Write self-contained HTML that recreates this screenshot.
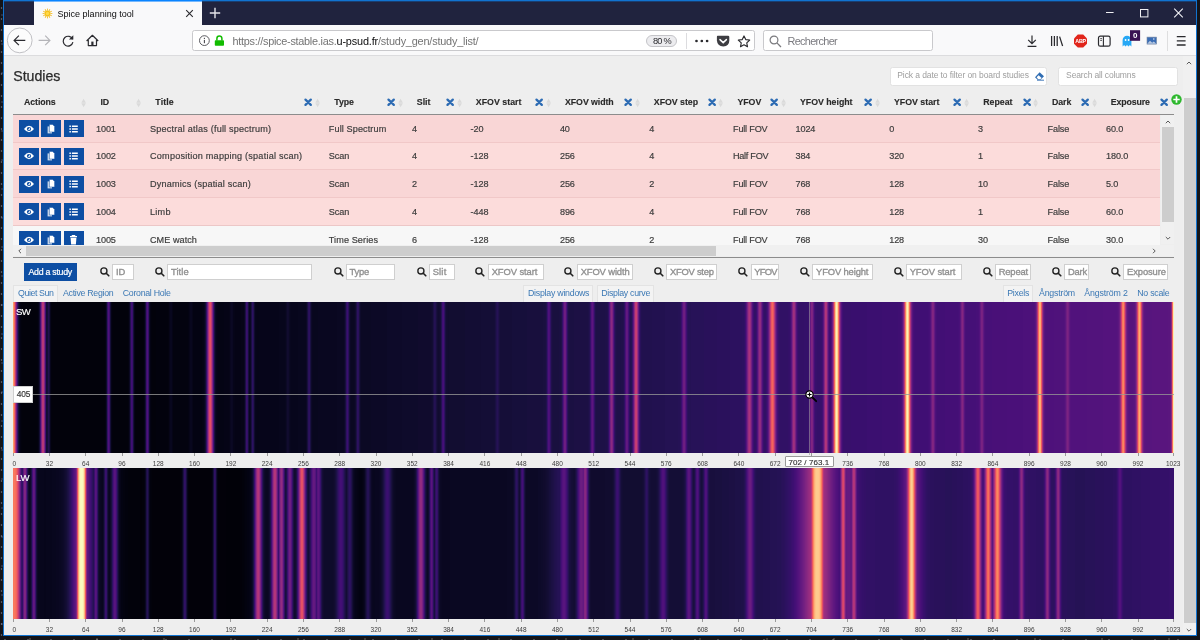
<!DOCTYPE html>
<html lang="fr"><head><meta charset="utf-8"><title>Spice planning tool</title>
<style>
html,body{margin:0;padding:0}
body{width:1200px;height:640px;overflow:hidden;position:relative;background:#17171a;font-family:"Liberation Sans",Arial,sans-serif;}
.b{position:absolute;display:block}
.t{position:absolute;white-space:pre;display:block}
#root{position:absolute;left:0;top:0;width:1200px;height:640px;will-change:transform;}
#desk{position:absolute;left:0;top:0;width:1200px;height:640px;background:
 radial-gradient(circle at 5px 3px,rgba(225,225,235,.75) 0,rgba(225,225,235,0) 1.1px) 0 0/23px 7px,
 radial-gradient(circle at 1.5px 8px,rgba(170,175,200,.7) 0,rgba(170,175,200,0) 1.2px) 0 0/41px 11px,
 radial-gradient(circle at 30px 2px,rgba(140,130,110,.7) 0,rgba(140,130,110,0) 1.4px) 0 0/67px 13px,
 radial-gradient(circle at 2px 15px,rgba(90,100,140,.6) 0,rgba(90,100,140,0) 1.6px) 0 0/17px 29px,
 #141418;}
</style></head>
<body>
<div id="desk"></div>
<div id="root">
<div class="b " style="left:3.00px;top:0.00px;width:1193.50px;height:636.00px;background:#1173d0;"></div>
<div class="b " style="left:4.00px;top:1.00px;width:1191.50px;height:24.00px;background:#20233e;"></div>
<div class="b " style="left:4.00px;top:25.00px;width:1191.50px;height:31.00px;background:#f9f9fa;"></div>
<div class="b " style="left:4.00px;top:55.00px;width:1191.50px;height:1.00px;background:#dcdcde;"></div>
<div class="b " style="left:4.00px;top:56.00px;width:1191.50px;height:579.00px;background:#eeeeee;"></div>
<div class="b " style="left:4.00px;top:1.00px;width:1191.50px;height:1.00px;background:rgba(17,115,208,.35);"></div>
<div class="b " style="left:34.00px;top:0.00px;width:168.00px;height:25.00px;background:#f9f9fa;border-top:1px solid #0a84ff;box-sizing:border-box;"></div>
<div class="b " style="left:34.00px;top:1.00px;width:168.00px;height:1.00px;background:rgba(10,132,255,.55);"></div>
<svg class="b" style="left:40.50px;top:7.00px;" width="13" height="13" viewBox="0 0 13 13"><g transform="translate(6.5,6.5)"><line x1="0" y1="-2.9" x2="0" y2="-4.9" stroke="#f3bd2a" stroke-width="0.9" transform="rotate(0)"/><line x1="0" y1="-2.9" x2="0" y2="-4.9" stroke="#f3bd2a" stroke-width="0.9" transform="rotate(30)"/><line x1="0" y1="-2.9" x2="0" y2="-4.9" stroke="#f3bd2a" stroke-width="0.9" transform="rotate(60)"/><line x1="0" y1="-2.9" x2="0" y2="-4.9" stroke="#f3bd2a" stroke-width="0.9" transform="rotate(90)"/><line x1="0" y1="-2.9" x2="0" y2="-4.9" stroke="#f3bd2a" stroke-width="0.9" transform="rotate(120)"/><line x1="0" y1="-2.9" x2="0" y2="-4.9" stroke="#f3bd2a" stroke-width="0.9" transform="rotate(150)"/><line x1="0" y1="-2.9" x2="0" y2="-4.9" stroke="#f3bd2a" stroke-width="0.9" transform="rotate(180)"/><line x1="0" y1="-2.9" x2="0" y2="-4.9" stroke="#f3bd2a" stroke-width="0.9" transform="rotate(210)"/><line x1="0" y1="-2.9" x2="0" y2="-4.9" stroke="#f3bd2a" stroke-width="0.9" transform="rotate(240)"/><line x1="0" y1="-2.9" x2="0" y2="-4.9" stroke="#f3bd2a" stroke-width="0.9" transform="rotate(270)"/><line x1="0" y1="-2.9" x2="0" y2="-4.9" stroke="#f3bd2a" stroke-width="0.9" transform="rotate(300)"/><line x1="0" y1="-2.9" x2="0" y2="-4.9" stroke="#f3bd2a" stroke-width="0.9" transform="rotate(330)"/><circle r="2.9" fill="#f5c018"/><circle r="1.7" fill="#ffd94a"/></g></svg>
<span class="t " style="left:57.50px;top:9.00px;font-size:9.00px;line-height:10px;color:#0c0c0d;letter-spacing:0.013px;">Spice planning tool</span>
<svg class="b" style="left:185.00px;top:9.00px;" width="9" height="9" viewBox="0 0 9 9"><path d="M1.2 1.2 L7.8 7.8 M7.8 1.2 L1.2 7.8" stroke="#2a2a2e" stroke-width="1.1" fill="none"/></svg>
<svg class="b" style="left:209.00px;top:7.00px;" width="12" height="12" viewBox="0 0 12 12"><path d="M6 0.8 V11.2 M0.8 6 H11.2" stroke="#e4e4ea" stroke-width="1.4" fill="none"/></svg>
<svg class="b" style="left:1100.00px;top:5.00px;" width="96" height="16" viewBox="0 0 96 16"><path d="M6 7.5 H13.6" stroke="#f0f0f4" stroke-width="1"/><rect x="40.5" y="4.5" width="7.4" height="7.4" fill="none" stroke="#f0f0f4" stroke-width="1"/><path d="M74.2 3.7 L82.8 12.3 M82.8 3.7 L74.2 12.3" stroke="#f4f4f8" stroke-width="1.05"/></svg>
<svg class="b" style="left:3.50px;top:25.00px;" width="100" height="31" viewBox="0 0 100 31">
<circle cx="15.7" cy="15.4" r="12.4" fill="#fcfcfc" stroke="#b9b9bd" stroke-width="0.9"/>
<path d="M21.3 15.4 H10.4 M14.9 10.6 L10.1 15.4 L14.9 20.2" stroke="#2b2b30" stroke-width="1.2" fill="none"/>
<path d="M34.6 15.4 H45.6 M41.2 10.7 L45.9 15.4 L41.2 20.1" stroke="#b4b4b8" stroke-width="1.2" fill="none"/>
<path d="M68.6 14.2 A4.9 4.9 0 1 0 68.9 17.2" stroke="#2b2b30" stroke-width="1.2" fill="none"/>
<path d="M69.3 10.2 V14.6 H64.9 Z" fill="#2b2b30"/>
<path d="M82.6 16 L88.4 10.3 L94.2 16 M84.3 15 V20.6 H92.5 V15" stroke="#2b2b30" stroke-width="1.2" fill="none" stroke-linejoin="round"/>
<rect x="87.3" y="16.6" width="2.2" height="4" fill="#2b2b30"/>
</svg>
<div class="b " style="left:191.50px;top:29.60px;width:563.50px;height:21.70px;background:#fff;border:1px solid #c9c9cc;border-radius:2.5px;box-sizing:border-box;"></div>
<div class="b " style="left:763.00px;top:29.60px;width:169.50px;height:21.70px;background:#fff;border:1px solid #c9c9cc;border-radius:2.5px;box-sizing:border-box;"></div>
<svg class="b" style="left:198.00px;top:34.00px;" width="30" height="14" viewBox="0 0 30 14"><circle cx="6.4" cy="6.6" r="4.9" fill="none" stroke="#4a4a4f" stroke-width="0.9"/><rect x="5.85" y="5.9" width="1.1" height="3.3" fill="#4a4a4f"/><rect x="5.85" y="3.8" width="1.1" height="1.2" fill="#4a4a4f"/>
<rect x="16.8" y="6.2" width="9.2" height="5.6" rx="0.8" fill="#12bc00"/><path d="M18.9 6.6 V4.4 A2.5 2.5 0 0 1 23.9 4.4 V6.6" fill="none" stroke="#12bc00" stroke-width="1.5"/></svg>
<span class="t " style="left:232.50px;top:35.00px;font-size:10.90px;line-height:12px;color:#737373;letter-spacing:-0.275px;">https://spice-stable.ias.</span>
<span class="t " style="left:336.50px;top:35.00px;font-size:10.90px;line-height:12px;color:#0c0c0d;letter-spacing:-0.168px;">u-psud.fr</span>
<span class="t " style="left:378.00px;top:35.00px;font-size:10.90px;line-height:12px;color:#737373;letter-spacing:-0.197px;">/study_gen/study_list/</span>
<div class="b " style="left:646.30px;top:34.70px;width:30.70px;height:12.00px;background:#ececef;border:1px solid #c4c4c8;border-radius:6px;box-sizing:border-box;"></div>
<span class="t " style="left:653.00px;top:36.00px;font-size:9.20px;line-height:10px;color:#2a2a2e;letter-spacing:-0.792px;">80 %</span>
<div class="b " style="left:686.00px;top:33.00px;width:1.00px;height:16.00px;background:#dcdcdf;"></div>
<svg class="b" style="left:694.00px;top:33.50px;" width="60" height="15" viewBox="0 0 60 15"><circle cx="2.5" cy="7" r="1.35" fill="#2a2a2e"/><circle cx="7.8" cy="7" r="1.35" fill="#2a2a2e"/><circle cx="13.1" cy="7" r="1.35" fill="#2a2a2e"/>
<path d="M23.6 1.8 H34 Q35.3 1.8 35.3 3.1 V6.6 Q35.3 12.4 29.3 12.4 Q23.3 12.4 22.9 6.6 V3.1 Q22.9 1.8 23.6 1.8 Z" fill="#3d3d42"/><path d="M26 5.6 L29.2 8.6 L32.4 5.6" stroke="#fff" stroke-width="1.5" fill="none" stroke-linecap="round"/>
<path d="M50 1.9 L51.75 5.6 L55.7 6.05 L52.75 8.8 L53.5 12.75 L50 10.8 L46.5 12.75 L47.25 8.8 L44.3 6.05 L48.25 5.6 Z" fill="none" stroke="#2a2a2e" stroke-width="1.15" stroke-linejoin="round"/></svg>
<svg class="b" style="left:768.00px;top:33.50px;" width="16" height="16" viewBox="0 0 16 16"><circle cx="6" cy="6" r="3.9" fill="none" stroke="#7a7a7e" stroke-width="1.2"/><path d="M8.9 8.9 L13 13" stroke="#7a7a7e" stroke-width="1.3"/></svg>
<span class="t " style="left:787.50px;top:35.00px;font-size:10.90px;line-height:12px;color:#7b7b80;letter-spacing:-0.684px;">Rechercher</span>
<svg class="b" style="left:1024.00px;top:34.00px;overflow:visible;" width="172" height="16" viewBox="0 0 172 16">
<path d="M8 1.5 V9.2 M4.2 5.8 L8 9.6 L11.8 5.8 M3.6 12.4 H12.4" stroke="#2a2a2e" stroke-width="1.2" fill="none"/>
<path d="M27.6 2 V12 M30.4 2 V12 M33.2 2 V12 M35.6 2.6 L38.6 12" stroke="#2a2a2e" stroke-width="1.25" fill="none"/>
<path d="M53.8 0.6 H59.2 L63 4.4 V9.8 L59.2 13.6 H53.8 L50 9.8 V4.4 Z" fill="#e1251b"/>
<rect x="74.5" y="2.2" width="11.6" height="10" rx="1.8" fill="none" stroke="#2a2a2e" stroke-width="1.2"/><path d="M79.4 2.2 V12.2" stroke="#2a2a2e" stroke-width="1.1"/><path d="M76.2 4.6 H78 M76.2 6.4 H78" stroke="#2a2a2e" stroke-width="0.8"/>
<path d="M98.6 12.4 V6.2 A4.4 4.4 0 0 1 107.4 6.2 V12.4 L105.9 11.1 L104.5 12.4 L103 11.1 L101.5 12.4 L100.1 11.1 Z" fill="#27a8f5"/><circle cx="101.6" cy="6" r="0.9" fill="#fff"/><circle cx="104.6" cy="6" r="0.9" fill="#fff"/>
<rect x="106" y="-3.8" width="10.1" height="10.6" fill="#3a1152"/>
<rect x="123" y="3.1" width="9.6" height="7" fill="#3a6db5" stroke="#7f8da3" stroke-width="0.6"/><path d="M123.4 9.4 L126 6.8 L128.2 8.8 L129.8 7.6 L132.2 9.8 H123.4Z" fill="#b9c9e0"/><circle cx="129.8" cy="5" r="0.8" fill="#dfe7f3"/>
<path d="M152.8 2.6 H161.6 M152.8 6.8 H161.6 M152.8 11 H161.6" stroke="#2a2a2e" stroke-width="1.3"/>
</svg>
<span class="t " style="left:1075.30px;top:38.00px;font-size:5.40px;line-height:6px;color:#fff;font-weight:700;letter-spacing:-0.267px;">ABP</span>
<span class="t " style="left:1132.98px;top:31.00px;font-size:8.00px;line-height:9px;color:#fff;font-weight:700;">0</span>
<div class="b " style="left:1166.50px;top:31.00px;width:1.00px;height:20.00px;background:#dededf;"></div>
<div class="b " style="left:1183.00px;top:56.00px;width:12.50px;height:579.00px;background:#f0f0f0;"></div>
<div class="b " style="left:1183.50px;top:98.00px;width:12.00px;height:525.00px;background:#cdcdcd;"></div>
<svg class="b" style="left:1184.30px;top:59.00px;" width="10" height="8" viewBox="0 0 10 8"><path d="M2.8 5.2 L5 3 L7.2 5.2" stroke="#5a5a5a" stroke-width="1" fill="none"/></svg>
<svg class="b" style="left:1184.30px;top:625.50px;" width="10" height="8" viewBox="0 0 10 8"><path d="M2.8 3 L5 5.2 L7.2 3" stroke="#5a5a5a" stroke-width="1" fill="none"/></svg>
<span class="t " style="left:13.20px;top:68.00px;font-size:14.20px;line-height:16px;color:#2b2b2b;letter-spacing:-0.009px;-webkit-text-stroke:0.25px #2b2b2b;">Studies</span>
<div class="b " style="left:890.00px;top:66.70px;width:156.70px;height:19.30px;background:#fff;border:1px solid #e2e2e2;border-radius:2.5px;box-sizing:border-box;"></div>
<div class="b " style="left:1058.00px;top:66.70px;width:120.00px;height:19.30px;background:#fff;border:1px solid #e2e2e2;border-radius:2.5px;box-sizing:border-box;"></div>
<span class="t " style="left:897.30px;top:70.00px;font-size:8.50px;line-height:10px;color:#9e9e9e;letter-spacing:-0.096px;">Pick a date to filter on board studies</span>
<span class="t " style="left:1066.10px;top:70.00px;font-size:8.50px;line-height:10px;color:#9e9e9e;letter-spacing:-0.134px;">Search all columns</span>
<svg class="b" style="left:1034.00px;top:71.00px;" width="11" height="10" viewBox="0 0 11 10"><path d="M1 6.2 L5.6 1.2 L10 5.2 L6.6 8.8 H3.6 Z" fill="#2f6db3"/><path d="M2.6 6.3 L4.6 4.2 L7.6 7 L6.2 8.3 H4.2 Z" fill="#fff"/><path d="M3 9.2 H10" stroke="#2f6db3" stroke-width="0.9"/></svg>
<span class="t " style="left:24.10px;top:97.00px;font-size:8.80px;line-height:10px;color:#2a2a2a;font-weight:700;letter-spacing:-0.110px;-webkit-text-stroke:0.12px #2a2a2a;">Actions</span>
<svg class="b" style="left:80.90px;top:97.50px;" width="5.2" height="10" viewBox="0 0 5.2 10"><path d="M0.3 4.65 L2.6 0.8 L4.9 4.65 Z M0.3 5.35 L2.6 9.2 L4.9 5.35 Z" fill="#dadada"/></svg>
<span class="t " style="left:100.50px;top:97.00px;font-size:8.80px;line-height:10px;color:#2a2a2a;font-weight:700;letter-spacing:-0.250px;-webkit-text-stroke:0.12px #2a2a2a;">ID</span>
<svg class="b" style="left:135.90px;top:97.50px;" width="5.2" height="10" viewBox="0 0 5.2 10"><path d="M0.3 4.65 L2.6 0.8 L4.9 4.65 Z M0.3 5.35 L2.6 9.2 L4.9 5.35 Z" fill="#dadada"/></svg>
<span class="t " style="left:155.30px;top:97.00px;font-size:8.80px;line-height:10px;color:#2a2a2a;font-weight:700;letter-spacing:0.114px;-webkit-text-stroke:0.12px #2a2a2a;">Title</span>
<svg class="b" style="left:304.25px;top:98.30px;" width="8.3" height="8.5" viewBox="0 0 8.3 8.5"><path d="M1.5 1.6 L6.8 6.9 M6.8 1.6 L1.5 6.9" stroke="#2c6bb3" stroke-width="2.25" stroke-linecap="round" fill="none"/></svg>
<svg class="b" style="left:314.90px;top:97.50px;" width="5.2" height="10" viewBox="0 0 5.2 10"><path d="M0.3 4.65 L2.6 0.8 L4.9 4.65 Z M0.3 5.35 L2.6 9.2 L4.9 5.35 Z" fill="#dadada"/></svg>
<span class="t " style="left:334.30px;top:97.00px;font-size:8.80px;line-height:10px;color:#2a2a2a;font-weight:700;letter-spacing:-0.097px;-webkit-text-stroke:0.12px #2a2a2a;">Type</span>
<svg class="b" style="left:387.35px;top:98.30px;" width="8.3" height="8.5" viewBox="0 0 8.3 8.5"><path d="M1.5 1.6 L6.8 6.9 M6.8 1.6 L1.5 6.9" stroke="#2c6bb3" stroke-width="2.25" stroke-linecap="round" fill="none"/></svg>
<svg class="b" style="left:397.90px;top:97.50px;" width="5.2" height="10" viewBox="0 0 5.2 10"><path d="M0.3 4.65 L2.6 0.8 L4.9 4.65 Z M0.3 5.35 L2.6 9.2 L4.9 5.35 Z" fill="#dadada"/></svg>
<span class="t " style="left:416.80px;top:97.00px;font-size:8.80px;line-height:10px;color:#2a2a2a;font-weight:700;-webkit-text-stroke:0.12px #2a2a2a;">Slit</span>
<svg class="b" style="left:446.05px;top:98.30px;" width="8.3" height="8.5" viewBox="0 0 8.3 8.5"><path d="M1.5 1.6 L6.8 6.9 M6.8 1.6 L1.5 6.9" stroke="#2c6bb3" stroke-width="2.25" stroke-linecap="round" fill="none"/></svg>
<svg class="b" style="left:456.90px;top:97.50px;" width="5.2" height="10" viewBox="0 0 5.2 10"><path d="M0.3 4.65 L2.6 0.8 L4.9 4.65 Z M0.3 5.35 L2.6 9.2 L4.9 5.35 Z" fill="#dadada"/></svg>
<span class="t " style="left:475.80px;top:97.00px;font-size:8.80px;line-height:10px;color:#2a2a2a;font-weight:700;letter-spacing:0.022px;-webkit-text-stroke:0.12px #2a2a2a;">XFOV start</span>
<svg class="b" style="left:535.45px;top:98.30px;" width="8.3" height="8.5" viewBox="0 0 8.3 8.5"><path d="M1.5 1.6 L6.8 6.9 M6.8 1.6 L1.5 6.9" stroke="#2c6bb3" stroke-width="2.25" stroke-linecap="round" fill="none"/></svg>
<svg class="b" style="left:545.90px;top:97.50px;" width="5.2" height="10" viewBox="0 0 5.2 10"><path d="M0.3 4.65 L2.6 0.8 L4.9 4.65 Z M0.3 5.35 L2.6 9.2 L4.9 5.35 Z" fill="#dadada"/></svg>
<span class="t " style="left:565.00px;top:97.00px;font-size:8.80px;line-height:10px;color:#2a2a2a;font-weight:700;letter-spacing:-0.068px;-webkit-text-stroke:0.12px #2a2a2a;">XFOV width</span>
<svg class="b" style="left:624.25px;top:98.30px;" width="8.3" height="8.5" viewBox="0 0 8.3 8.5"><path d="M1.5 1.6 L6.8 6.9 M6.8 1.6 L1.5 6.9" stroke="#2c6bb3" stroke-width="2.25" stroke-linecap="round" fill="none"/></svg>
<svg class="b" style="left:634.90px;top:97.50px;" width="5.2" height="10" viewBox="0 0 5.2 10"><path d="M0.3 4.65 L2.6 0.8 L4.9 4.65 Z M0.3 5.35 L2.6 9.2 L4.9 5.35 Z" fill="#dadada"/></svg>
<span class="t " style="left:653.80px;top:97.00px;font-size:8.80px;line-height:10px;color:#2a2a2a;font-weight:700;letter-spacing:-0.033px;-webkit-text-stroke:0.12px #2a2a2a;">XFOV step</span>
<svg class="b" style="left:707.95px;top:98.30px;" width="8.3" height="8.5" viewBox="0 0 8.3 8.5"><path d="M1.5 1.6 L6.8 6.9 M6.8 1.6 L1.5 6.9" stroke="#2c6bb3" stroke-width="2.25" stroke-linecap="round" fill="none"/></svg>
<svg class="b" style="left:718.40px;top:97.50px;" width="5.2" height="10" viewBox="0 0 5.2 10"><path d="M0.3 4.65 L2.6 0.8 L4.9 4.65 Z M0.3 5.35 L2.6 9.2 L4.9 5.35 Z" fill="#dadada"/></svg>
<span class="t " style="left:737.50px;top:97.00px;font-size:8.80px;line-height:10px;color:#2a2a2a;font-weight:700;letter-spacing:-0.065px;-webkit-text-stroke:0.12px #2a2a2a;">YFOV</span>
<svg class="b" style="left:770.45px;top:98.30px;" width="8.3" height="8.5" viewBox="0 0 8.3 8.5"><path d="M1.5 1.6 L6.8 6.9 M6.8 1.6 L1.5 6.9" stroke="#2c6bb3" stroke-width="2.25" stroke-linecap="round" fill="none"/></svg>
<svg class="b" style="left:780.90px;top:97.50px;" width="5.2" height="10" viewBox="0 0 5.2 10"><path d="M0.3 4.65 L2.6 0.8 L4.9 4.65 Z M0.3 5.35 L2.6 9.2 L4.9 5.35 Z" fill="#dadada"/></svg>
<span class="t " style="left:800.00px;top:97.00px;font-size:8.80px;line-height:10px;color:#2a2a2a;font-weight:700;letter-spacing:-0.027px;-webkit-text-stroke:0.12px #2a2a2a;">YFOV height</span>
<svg class="b" style="left:864.35px;top:98.30px;" width="8.3" height="8.5" viewBox="0 0 8.3 8.5"><path d="M1.5 1.6 L6.8 6.9 M6.8 1.6 L1.5 6.9" stroke="#2c6bb3" stroke-width="2.25" stroke-linecap="round" fill="none"/></svg>
<svg class="b" style="left:874.90px;top:97.50px;" width="5.2" height="10" viewBox="0 0 5.2 10"><path d="M0.3 4.65 L2.6 0.8 L4.9 4.65 Z M0.3 5.35 L2.6 9.2 L4.9 5.35 Z" fill="#dadada"/></svg>
<span class="t " style="left:893.90px;top:97.00px;font-size:8.80px;line-height:10px;color:#2a2a2a;font-weight:700;letter-spacing:0.012px;-webkit-text-stroke:0.12px #2a2a2a;">YFOV start</span>
<svg class="b" style="left:953.15px;top:98.30px;" width="8.3" height="8.5" viewBox="0 0 8.3 8.5"><path d="M1.5 1.6 L6.8 6.9 M6.8 1.6 L1.5 6.9" stroke="#2c6bb3" stroke-width="2.25" stroke-linecap="round" fill="none"/></svg>
<svg class="b" style="left:964.40px;top:97.50px;" width="5.2" height="10" viewBox="0 0 5.2 10"><path d="M0.3 4.65 L2.6 0.8 L4.9 4.65 Z M0.3 5.35 L2.6 9.2 L4.9 5.35 Z" fill="#dadada"/></svg>
<span class="t " style="left:983.20px;top:97.00px;font-size:8.80px;line-height:10px;color:#2a2a2a;font-weight:700;letter-spacing:-0.007px;-webkit-text-stroke:0.12px #2a2a2a;">Repeat</span>
<svg class="b" style="left:1022.55px;top:98.30px;" width="8.3" height="8.5" viewBox="0 0 8.3 8.5"><path d="M1.5 1.6 L6.8 6.9 M6.8 1.6 L1.5 6.9" stroke="#2c6bb3" stroke-width="2.25" stroke-linecap="round" fill="none"/></svg>
<svg class="b" style="left:1033.40px;top:97.50px;" width="5.2" height="10" viewBox="0 0 5.2 10"><path d="M0.3 4.65 L2.6 0.8 L4.9 4.65 Z M0.3 5.35 L2.6 9.2 L4.9 5.35 Z" fill="#dadada"/></svg>
<span class="t " style="left:1052.00px;top:97.00px;font-size:8.80px;line-height:10px;color:#2a2a2a;font-weight:700;letter-spacing:-0.092px;-webkit-text-stroke:0.12px #2a2a2a;">Dark</span>
<svg class="b" style="left:1081.15px;top:98.30px;" width="8.3" height="8.5" viewBox="0 0 8.3 8.5"><path d="M1.5 1.6 L6.8 6.9 M6.8 1.6 L1.5 6.9" stroke="#2c6bb3" stroke-width="2.25" stroke-linecap="round" fill="none"/></svg>
<svg class="b" style="left:1091.90px;top:97.50px;" width="5.2" height="10" viewBox="0 0 5.2 10"><path d="M0.3 4.65 L2.6 0.8 L4.9 4.65 Z M0.3 5.35 L2.6 9.2 L4.9 5.35 Z" fill="#dadada"/></svg>
<span class="t " style="left:1110.70px;top:97.00px;font-size:8.80px;line-height:10px;color:#2a2a2a;font-weight:700;letter-spacing:-0.113px;-webkit-text-stroke:0.12px #2a2a2a;">Exposure</span>
<svg class="b" style="left:1160.35px;top:98.30px;" width="8.3" height="8.5" viewBox="0 0 8.3 8.5"><path d="M1.5 1.6 L6.8 6.9 M6.8 1.6 L1.5 6.9" stroke="#2c6bb3" stroke-width="2.25" stroke-linecap="round" fill="none"/></svg>
<svg class="b" style="left:1170.60px;top:94.20px;" width="11" height="11" viewBox="0 0 11 11"><circle cx="5.5" cy="5.5" r="5.2" fill="#2eb82e"/><path d="M5.5 2.3 V8.7 M2.3 5.5 H8.7" stroke="#fff" stroke-width="1.7"/></svg>
<div class="b " style="left:0.00px;top:0.00px;width:1200.00px;height:244.50px;overflow:hidden;background:none;"><div class="b " style="left:13.30px;top:114.30px;width:1147.20px;height:27.75px;background:#f9d6d6;"></div><div class="b " style="left:18.90px;top:120.00px;width:19.90px;height:17.00px;background:#0d4ea3;"></div><svg class="b" style="left:23.85px;top:124.50px;" width="10" height="8" viewBox="0 0 10 8"><path d="M0 4 Q5 -2.4 10 4 Q5 10.4 0 4 Z" fill="#fff"/><circle cx="5" cy="4" r="2.1" fill="#0d4ea3"/><circle cx="5.1" cy="3.9" r="1.1" fill="#fff" opacity=".85"/><circle cx="4.4" cy="3.3" r="0.7" fill="#0d4ea3"/></svg><div class="b " style="left:41.30px;top:120.00px;width:19.90px;height:17.00px;background:#0d4ea3;"></div><svg class="b" style="left:47.25px;top:123.50px;" width="8" height="10" viewBox="0 0 8 10"><path d="M0.6 2.4 H5 V9.4 H0.6 Z" fill="#fff" opacity=".8"/><path d="M2.4 0.4 H5.6 L7.6 2.4 V8 H2.4 Z" fill="#fff" stroke="#0d4ea3" stroke-width="0.5"/></svg><div class="b " style="left:63.90px;top:120.00px;width:19.90px;height:17.00px;background:#0d4ea3;"></div><svg class="b" style="left:69.25px;top:124.50px;" width="9.2" height="8" viewBox="0 0 9.2 8"><path d="M0.4 1.3 H1.9 M0.4 4 H1.9 M0.4 6.7 H1.9" stroke="#fff" stroke-width="1.4"/><path d="M2.9 1.3 H8.8 M2.9 4 H8.8 M2.9 6.7 H8.8" stroke="#fff" stroke-width="1.4"/></svg><span class="t " style="left:96.00px;top:124.00px;font-size:9.10px;line-height:10px;color:#3c3c3c;letter-spacing:-0.111px;-webkit-text-stroke:0.18px #3c3c3c;">1001</span><span class="t " style="left:150.00px;top:124.00px;font-size:9.10px;line-height:10px;color:#3c3c3c;letter-spacing:0.203px;-webkit-text-stroke:0.18px #3c3c3c;">Spectral atlas (full spectrum)</span><span class="t " style="left:328.80px;top:124.00px;font-size:9.10px;line-height:10px;color:#3c3c3c;letter-spacing:0.113px;-webkit-text-stroke:0.18px #3c3c3c;">Full Spectrum</span><span class="t " style="left:412.00px;top:124.00px;font-size:9.10px;line-height:10px;color:#3c3c3c;-webkit-text-stroke:0.18px #3c3c3c;">4</span><span class="t " style="left:470.50px;top:124.00px;font-size:9.10px;line-height:10px;color:#3c3c3c;letter-spacing:-0.051px;-webkit-text-stroke:0.18px #3c3c3c;">-20</span><span class="t " style="left:560.00px;top:124.00px;font-size:9.10px;line-height:10px;color:#3c3c3c;letter-spacing:-0.211px;-webkit-text-stroke:0.18px #3c3c3c;">40</span><span class="t " style="left:649.30px;top:124.00px;font-size:9.10px;line-height:10px;color:#3c3c3c;-webkit-text-stroke:0.18px #3c3c3c;">4</span><span class="t " style="left:733.00px;top:124.00px;font-size:9.10px;line-height:10px;color:#3c3c3c;letter-spacing:-0.175px;-webkit-text-stroke:0.18px #3c3c3c;">Full FOV</span><span class="t " style="left:795.50px;top:124.00px;font-size:9.10px;line-height:10px;color:#3c3c3c;letter-spacing:-0.111px;-webkit-text-stroke:0.18px #3c3c3c;">1024</span><span class="t " style="left:889.30px;top:124.00px;font-size:9.10px;line-height:10px;color:#3c3c3c;-webkit-text-stroke:0.18px #3c3c3c;">0</span><span class="t " style="left:978.10px;top:124.00px;font-size:9.10px;line-height:10px;color:#3c3c3c;-webkit-text-stroke:0.18px #3c3c3c;">3</span><span class="t " style="left:1047.50px;top:124.00px;font-size:9.10px;line-height:10px;color:#3c3c3c;letter-spacing:-0.091px;-webkit-text-stroke:0.18px #3c3c3c;">False</span><span class="t " style="left:1106.00px;top:124.00px;font-size:9.10px;line-height:10px;color:#3c3c3c;letter-spacing:-0.140px;-webkit-text-stroke:0.18px #3c3c3c;">60.0</span><div class="b " style="left:13.30px;top:142.05px;width:1147.20px;height:27.75px;background:#fcdcdb;"></div><div class="b " style="left:13.30px;top:141.55px;width:1147.20px;height:1.00px;background:#f1c8c8;"></div><div class="b " style="left:18.90px;top:147.75px;width:19.90px;height:17.00px;background:#0d4ea3;"></div><svg class="b" style="left:23.85px;top:152.25px;" width="10" height="8" viewBox="0 0 10 8"><path d="M0 4 Q5 -2.4 10 4 Q5 10.4 0 4 Z" fill="#fff"/><circle cx="5" cy="4" r="2.1" fill="#0d4ea3"/><circle cx="5.1" cy="3.9" r="1.1" fill="#fff" opacity=".85"/><circle cx="4.4" cy="3.3" r="0.7" fill="#0d4ea3"/></svg><div class="b " style="left:41.30px;top:147.75px;width:19.90px;height:17.00px;background:#0d4ea3;"></div><svg class="b" style="left:47.25px;top:151.25px;" width="8" height="10" viewBox="0 0 8 10"><path d="M0.6 2.4 H5 V9.4 H0.6 Z" fill="#fff" opacity=".8"/><path d="M2.4 0.4 H5.6 L7.6 2.4 V8 H2.4 Z" fill="#fff" stroke="#0d4ea3" stroke-width="0.5"/></svg><div class="b " style="left:63.90px;top:147.75px;width:19.90px;height:17.00px;background:#0d4ea3;"></div><svg class="b" style="left:69.25px;top:152.25px;" width="9.2" height="8" viewBox="0 0 9.2 8"><path d="M0.4 1.3 H1.9 M0.4 4 H1.9 M0.4 6.7 H1.9" stroke="#fff" stroke-width="1.4"/><path d="M2.9 1.3 H8.8 M2.9 4 H8.8 M2.9 6.7 H8.8" stroke="#fff" stroke-width="1.4"/></svg><span class="t " style="left:96.00px;top:151.00px;font-size:9.10px;line-height:10px;color:#3c3c3c;letter-spacing:-0.111px;-webkit-text-stroke:0.18px #3c3c3c;">1002</span><span class="t " style="left:150.00px;top:151.00px;font-size:9.10px;line-height:10px;color:#3c3c3c;letter-spacing:0.228px;-webkit-text-stroke:0.18px #3c3c3c;">Composition mapping (spatial scan)</span><span class="t " style="left:328.80px;top:151.00px;font-size:9.10px;line-height:10px;color:#3c3c3c;letter-spacing:-0.086px;-webkit-text-stroke:0.18px #3c3c3c;">Scan</span><span class="t " style="left:412.00px;top:151.00px;font-size:9.10px;line-height:10px;color:#3c3c3c;-webkit-text-stroke:0.18px #3c3c3c;">4</span><span class="t " style="left:470.50px;top:151.00px;font-size:9.10px;line-height:10px;color:#3c3c3c;letter-spacing:-0.041px;-webkit-text-stroke:0.18px #3c3c3c;">-128</span><span class="t " style="left:560.00px;top:151.00px;font-size:9.10px;line-height:10px;color:#3c3c3c;letter-spacing:-0.144px;-webkit-text-stroke:0.18px #3c3c3c;">256</span><span class="t " style="left:649.30px;top:151.00px;font-size:9.10px;line-height:10px;color:#3c3c3c;-webkit-text-stroke:0.18px #3c3c3c;">4</span><span class="t " style="left:733.00px;top:151.00px;font-size:9.10px;line-height:10px;color:#3c3c3c;letter-spacing:-0.265px;-webkit-text-stroke:0.18px #3c3c3c;">Half FOV</span><span class="t " style="left:795.50px;top:151.00px;font-size:9.10px;line-height:10px;color:#3c3c3c;letter-spacing:-0.144px;-webkit-text-stroke:0.18px #3c3c3c;">384</span><span class="t " style="left:889.30px;top:151.00px;font-size:9.10px;line-height:10px;color:#3c3c3c;letter-spacing:-0.144px;-webkit-text-stroke:0.18px #3c3c3c;">320</span><span class="t " style="left:978.10px;top:151.00px;font-size:9.10px;line-height:10px;color:#3c3c3c;-webkit-text-stroke:0.18px #3c3c3c;">1</span><span class="t " style="left:1047.50px;top:151.00px;font-size:9.10px;line-height:10px;color:#3c3c3c;letter-spacing:-0.091px;-webkit-text-stroke:0.18px #3c3c3c;">False</span><span class="t " style="left:1106.00px;top:151.00px;font-size:9.10px;line-height:10px;color:#3c3c3c;letter-spacing:-0.115px;-webkit-text-stroke:0.18px #3c3c3c;">180.0</span><div class="b " style="left:13.30px;top:169.80px;width:1147.20px;height:27.75px;background:#f9d6d6;"></div><div class="b " style="left:13.30px;top:169.30px;width:1147.20px;height:1.00px;background:#f1c8c8;"></div><div class="b " style="left:18.90px;top:175.50px;width:19.90px;height:17.00px;background:#0d4ea3;"></div><svg class="b" style="left:23.85px;top:180.00px;" width="10" height="8" viewBox="0 0 10 8"><path d="M0 4 Q5 -2.4 10 4 Q5 10.4 0 4 Z" fill="#fff"/><circle cx="5" cy="4" r="2.1" fill="#0d4ea3"/><circle cx="5.1" cy="3.9" r="1.1" fill="#fff" opacity=".85"/><circle cx="4.4" cy="3.3" r="0.7" fill="#0d4ea3"/></svg><div class="b " style="left:41.30px;top:175.50px;width:19.90px;height:17.00px;background:#0d4ea3;"></div><svg class="b" style="left:47.25px;top:179.00px;" width="8" height="10" viewBox="0 0 8 10"><path d="M0.6 2.4 H5 V9.4 H0.6 Z" fill="#fff" opacity=".8"/><path d="M2.4 0.4 H5.6 L7.6 2.4 V8 H2.4 Z" fill="#fff" stroke="#0d4ea3" stroke-width="0.5"/></svg><div class="b " style="left:63.90px;top:175.50px;width:19.90px;height:17.00px;background:#0d4ea3;"></div><svg class="b" style="left:69.25px;top:180.00px;" width="9.2" height="8" viewBox="0 0 9.2 8"><path d="M0.4 1.3 H1.9 M0.4 4 H1.9 M0.4 6.7 H1.9" stroke="#fff" stroke-width="1.4"/><path d="M2.9 1.3 H8.8 M2.9 4 H8.8 M2.9 6.7 H8.8" stroke="#fff" stroke-width="1.4"/></svg><span class="t " style="left:96.00px;top:179.00px;font-size:9.10px;line-height:10px;color:#3c3c3c;letter-spacing:-0.111px;-webkit-text-stroke:0.18px #3c3c3c;">1003</span><span class="t " style="left:150.00px;top:179.00px;font-size:9.10px;line-height:10px;color:#3c3c3c;letter-spacing:0.192px;-webkit-text-stroke:0.18px #3c3c3c;">Dynamics (spatial scan)</span><span class="t " style="left:328.80px;top:179.00px;font-size:9.10px;line-height:10px;color:#3c3c3c;letter-spacing:-0.086px;-webkit-text-stroke:0.18px #3c3c3c;">Scan</span><span class="t " style="left:412.00px;top:179.00px;font-size:9.10px;line-height:10px;color:#3c3c3c;-webkit-text-stroke:0.18px #3c3c3c;">2</span><span class="t " style="left:470.50px;top:179.00px;font-size:9.10px;line-height:10px;color:#3c3c3c;letter-spacing:-0.041px;-webkit-text-stroke:0.18px #3c3c3c;">-128</span><span class="t " style="left:560.00px;top:179.00px;font-size:9.10px;line-height:10px;color:#3c3c3c;letter-spacing:-0.144px;-webkit-text-stroke:0.18px #3c3c3c;">256</span><span class="t " style="left:649.30px;top:179.00px;font-size:9.10px;line-height:10px;color:#3c3c3c;-webkit-text-stroke:0.18px #3c3c3c;">2</span><span class="t " style="left:733.00px;top:179.00px;font-size:9.10px;line-height:10px;color:#3c3c3c;letter-spacing:-0.175px;-webkit-text-stroke:0.18px #3c3c3c;">Full FOV</span><span class="t " style="left:795.50px;top:179.00px;font-size:9.10px;line-height:10px;color:#3c3c3c;letter-spacing:-0.144px;-webkit-text-stroke:0.18px #3c3c3c;">768</span><span class="t " style="left:889.30px;top:179.00px;font-size:9.10px;line-height:10px;color:#3c3c3c;letter-spacing:-0.144px;-webkit-text-stroke:0.18px #3c3c3c;">128</span><span class="t " style="left:978.10px;top:179.00px;font-size:9.10px;line-height:10px;color:#3c3c3c;letter-spacing:-0.211px;-webkit-text-stroke:0.18px #3c3c3c;">10</span><span class="t " style="left:1047.50px;top:179.00px;font-size:9.10px;line-height:10px;color:#3c3c3c;letter-spacing:-0.091px;-webkit-text-stroke:0.18px #3c3c3c;">False</span><span class="t " style="left:1106.00px;top:179.00px;font-size:9.10px;line-height:10px;color:#3c3c3c;letter-spacing:-0.183px;-webkit-text-stroke:0.18px #3c3c3c;">5.0</span><div class="b " style="left:13.30px;top:197.55px;width:1147.20px;height:27.75px;background:#fcdcdb;"></div><div class="b " style="left:13.30px;top:197.05px;width:1147.20px;height:1.00px;background:#f1c8c8;"></div><div class="b " style="left:18.90px;top:203.25px;width:19.90px;height:17.00px;background:#0d4ea3;"></div><svg class="b" style="left:23.85px;top:207.75px;" width="10" height="8" viewBox="0 0 10 8"><path d="M0 4 Q5 -2.4 10 4 Q5 10.4 0 4 Z" fill="#fff"/><circle cx="5" cy="4" r="2.1" fill="#0d4ea3"/><circle cx="5.1" cy="3.9" r="1.1" fill="#fff" opacity=".85"/><circle cx="4.4" cy="3.3" r="0.7" fill="#0d4ea3"/></svg><div class="b " style="left:41.30px;top:203.25px;width:19.90px;height:17.00px;background:#0d4ea3;"></div><svg class="b" style="left:47.25px;top:206.75px;" width="8" height="10" viewBox="0 0 8 10"><path d="M0.6 2.4 H5 V9.4 H0.6 Z" fill="#fff" opacity=".8"/><path d="M2.4 0.4 H5.6 L7.6 2.4 V8 H2.4 Z" fill="#fff" stroke="#0d4ea3" stroke-width="0.5"/></svg><div class="b " style="left:63.90px;top:203.25px;width:19.90px;height:17.00px;background:#0d4ea3;"></div><svg class="b" style="left:69.25px;top:207.75px;" width="9.2" height="8" viewBox="0 0 9.2 8"><path d="M0.4 1.3 H1.9 M0.4 4 H1.9 M0.4 6.7 H1.9" stroke="#fff" stroke-width="1.4"/><path d="M2.9 1.3 H8.8 M2.9 4 H8.8 M2.9 6.7 H8.8" stroke="#fff" stroke-width="1.4"/></svg><span class="t " style="left:96.00px;top:207.00px;font-size:9.10px;line-height:10px;color:#3c3c3c;letter-spacing:-0.111px;-webkit-text-stroke:0.18px #3c3c3c;">1004</span><span class="t " style="left:150.00px;top:207.00px;font-size:9.10px;line-height:10px;color:#3c3c3c;letter-spacing:0.244px;-webkit-text-stroke:0.18px #3c3c3c;">Limb</span><span class="t " style="left:328.80px;top:207.00px;font-size:9.10px;line-height:10px;color:#3c3c3c;letter-spacing:-0.086px;-webkit-text-stroke:0.18px #3c3c3c;">Scan</span><span class="t " style="left:412.00px;top:207.00px;font-size:9.10px;line-height:10px;color:#3c3c3c;-webkit-text-stroke:0.18px #3c3c3c;">4</span><span class="t " style="left:470.50px;top:207.00px;font-size:9.10px;line-height:10px;color:#3c3c3c;letter-spacing:-0.041px;-webkit-text-stroke:0.18px #3c3c3c;">-448</span><span class="t " style="left:560.00px;top:207.00px;font-size:9.10px;line-height:10px;color:#3c3c3c;letter-spacing:-0.144px;-webkit-text-stroke:0.18px #3c3c3c;">896</span><span class="t " style="left:649.30px;top:207.00px;font-size:9.10px;line-height:10px;color:#3c3c3c;-webkit-text-stroke:0.18px #3c3c3c;">4</span><span class="t " style="left:733.00px;top:207.00px;font-size:9.10px;line-height:10px;color:#3c3c3c;letter-spacing:-0.175px;-webkit-text-stroke:0.18px #3c3c3c;">Full FOV</span><span class="t " style="left:795.50px;top:207.00px;font-size:9.10px;line-height:10px;color:#3c3c3c;letter-spacing:-0.144px;-webkit-text-stroke:0.18px #3c3c3c;">768</span><span class="t " style="left:889.30px;top:207.00px;font-size:9.10px;line-height:10px;color:#3c3c3c;letter-spacing:-0.144px;-webkit-text-stroke:0.18px #3c3c3c;">128</span><span class="t " style="left:978.10px;top:207.00px;font-size:9.10px;line-height:10px;color:#3c3c3c;-webkit-text-stroke:0.18px #3c3c3c;">1</span><span class="t " style="left:1047.50px;top:207.00px;font-size:9.10px;line-height:10px;color:#3c3c3c;letter-spacing:-0.091px;-webkit-text-stroke:0.18px #3c3c3c;">False</span><span class="t " style="left:1106.00px;top:207.00px;font-size:9.10px;line-height:10px;color:#3c3c3c;letter-spacing:-0.140px;-webkit-text-stroke:0.18px #3c3c3c;">60.0</span><div class="b " style="left:13.30px;top:225.30px;width:1147.20px;height:27.75px;background:#f7f7f7;"></div><div class="b " style="left:13.30px;top:224.80px;width:1147.20px;height:1.00px;background:#ecc7c7;"></div><div class="b " style="left:18.90px;top:231.00px;width:19.90px;height:17.00px;background:#0d4ea3;"></div><svg class="b" style="left:23.85px;top:235.50px;" width="10" height="8" viewBox="0 0 10 8"><path d="M0 4 Q5 -2.4 10 4 Q5 10.4 0 4 Z" fill="#fff"/><circle cx="5" cy="4" r="2.1" fill="#0d4ea3"/><circle cx="5.1" cy="3.9" r="1.1" fill="#fff" opacity=".85"/><circle cx="4.4" cy="3.3" r="0.7" fill="#0d4ea3"/></svg><div class="b " style="left:41.30px;top:231.00px;width:19.90px;height:17.00px;background:#0d4ea3;"></div><svg class="b" style="left:47.25px;top:234.50px;" width="8" height="10" viewBox="0 0 8 10"><path d="M0.6 2.4 H5 V9.4 H0.6 Z" fill="#fff" opacity=".8"/><path d="M2.4 0.4 H5.6 L7.6 2.4 V8 H2.4 Z" fill="#fff" stroke="#0d4ea3" stroke-width="0.5"/></svg><div class="b " style="left:63.90px;top:231.00px;width:19.90px;height:17.00px;background:#0d4ea3;"></div><svg class="b" style="left:69.35px;top:234.50px;" width="9" height="10" viewBox="0 0 9 10"><path d="M1 1.6 H8 M3.3 1.4 V0.6 H5.7 V1.4" stroke="#fff" stroke-width="1.1" fill="none"/><path d="M1.6 2.8 H7.4 L6.9 9.6 H2.1 Z" fill="#fff"/></svg><span class="t " style="left:96.00px;top:235.00px;font-size:9.10px;line-height:10px;color:#3c3c3c;letter-spacing:-0.111px;-webkit-text-stroke:0.18px #3c3c3c;">1005</span><span class="t " style="left:150.00px;top:235.00px;font-size:9.10px;line-height:10px;color:#3c3c3c;letter-spacing:0.053px;-webkit-text-stroke:0.18px #3c3c3c;">CME watch</span><span class="t " style="left:328.80px;top:235.00px;font-size:9.10px;line-height:10px;color:#3c3c3c;letter-spacing:0.099px;-webkit-text-stroke:0.18px #3c3c3c;">Time Series</span><span class="t " style="left:412.00px;top:235.00px;font-size:9.10px;line-height:10px;color:#3c3c3c;-webkit-text-stroke:0.18px #3c3c3c;">6</span><span class="t " style="left:470.50px;top:235.00px;font-size:9.10px;line-height:10px;color:#3c3c3c;letter-spacing:-0.041px;-webkit-text-stroke:0.18px #3c3c3c;">-128</span><span class="t " style="left:560.00px;top:235.00px;font-size:9.10px;line-height:10px;color:#3c3c3c;letter-spacing:-0.144px;-webkit-text-stroke:0.18px #3c3c3c;">256</span><span class="t " style="left:649.30px;top:235.00px;font-size:9.10px;line-height:10px;color:#3c3c3c;-webkit-text-stroke:0.18px #3c3c3c;">2</span><span class="t " style="left:733.00px;top:235.00px;font-size:9.10px;line-height:10px;color:#3c3c3c;letter-spacing:-0.175px;-webkit-text-stroke:0.18px #3c3c3c;">Full FOV</span><span class="t " style="left:795.50px;top:235.00px;font-size:9.10px;line-height:10px;color:#3c3c3c;letter-spacing:-0.144px;-webkit-text-stroke:0.18px #3c3c3c;">768</span><span class="t " style="left:889.30px;top:235.00px;font-size:9.10px;line-height:10px;color:#3c3c3c;letter-spacing:-0.144px;-webkit-text-stroke:0.18px #3c3c3c;">128</span><span class="t " style="left:978.10px;top:235.00px;font-size:9.10px;line-height:10px;color:#3c3c3c;letter-spacing:-0.211px;-webkit-text-stroke:0.18px #3c3c3c;">30</span><span class="t " style="left:1047.50px;top:235.00px;font-size:9.10px;line-height:10px;color:#3c3c3c;letter-spacing:-0.091px;-webkit-text-stroke:0.18px #3c3c3c;">False</span><span class="t " style="left:1106.00px;top:235.00px;font-size:9.10px;line-height:10px;color:#3c3c3c;letter-spacing:-0.140px;-webkit-text-stroke:0.18px #3c3c3c;">30.0</span></div>
<div class="b " style="left:13.30px;top:113.70px;width:1160.70px;height:0.90px;background:#8c8c8c;"></div>
<div class="b " style="left:1160.50px;top:114.60px;width:13.50px;height:129.90px;background:#f0f0f0;"></div>
<div class="b " style="left:1161.50px;top:127.30px;width:12.50px;height:95.20px;background:#cdcdcd;"></div>
<svg class="b" style="left:1162.50px;top:118.00px;" width="10" height="8" viewBox="0 0 10 8"><path d="M2.8 5.2 L5 3 L7.2 5.2" stroke="#5a5a5a" stroke-width="1" fill="none"/></svg>
<svg class="b" style="left:1162.50px;top:234.00px;" width="10" height="8" viewBox="0 0 10 8"><path d="M2.8 3 L5 5.2 L7.2 3" stroke="#5a5a5a" stroke-width="1" fill="none"/></svg>
<div class="b " style="left:13.30px;top:244.50px;width:1160.70px;height:11.70px;background:#f0f0f0;"></div>
<div class="b " style="left:26.00px;top:245.50px;width:690.00px;height:10.70px;background:#cdcdcd;"></div>
<svg class="b" style="left:15.50px;top:245.50px;" width="8" height="10" viewBox="0 0 8 10"><path d="M5 2.8 L2.8 5 L5 7.2" stroke="#5a5a5a" stroke-width="1" fill="none"/></svg>
<svg class="b" style="left:1149.50px;top:245.50px;" width="8" height="10" viewBox="0 0 8 10"><path d="M3 2.8 L5.2 5 L3 7.2" stroke="#5a5a5a" stroke-width="1" fill="none"/></svg>
<div class="b " style="left:13.30px;top:256.60px;width:1160.70px;height:1.00px;background:#8c8c8c;"></div>
<div class="b " style="left:23.60px;top:263.40px;width:53.40px;height:17.60px;background:#0d4ea3;"></div>
<span class="t " style="left:28.50px;top:267.00px;font-size:8.80px;line-height:10px;color:#fff;letter-spacing:-0.271px;-webkit-text-stroke:0.2px #fff;">Add a study</span>
<svg class="b" style="left:100.00px;top:267.00px;" width="10" height="10" viewBox="0 0 10 10"><circle cx="3.9" cy="3.9" r="3.05" fill="none" stroke="#222" stroke-width="1.35"/><path d="M6.2 6.2 L8.8 8.8" stroke="#222" stroke-width="1.6" stroke-linecap="round"/></svg>
<div class="b " style="left:112.40px;top:264.30px;width:21.20px;height:15.50px;background:#fff;border:1px solid #cfcfcf;box-sizing:border-box;"></div>
<span class="t " style="left:116.10px;top:266.00px;font-size:9.40px;line-height:11px;color:#909090;letter-spacing:-0.200px;-webkit-text-stroke:0.35px #909090;">ID</span>
<svg class="b" style="left:154.80px;top:267.00px;" width="10" height="10" viewBox="0 0 10 10"><circle cx="3.9" cy="3.9" r="3.05" fill="none" stroke="#222" stroke-width="1.35"/><path d="M6.2 6.2 L8.8 8.8" stroke="#222" stroke-width="1.6" stroke-linecap="round"/></svg>
<div class="b " style="left:167.20px;top:264.30px;width:144.60px;height:15.50px;background:#fff;border:1px solid #cfcfcf;box-sizing:border-box;"></div>
<span class="t " style="left:170.90px;top:266.00px;font-size:9.40px;line-height:11px;color:#909090;letter-spacing:0.118px;-webkit-text-stroke:0.35px #909090;">Title</span>
<svg class="b" style="left:333.60px;top:267.00px;" width="10" height="10" viewBox="0 0 10 10"><circle cx="3.9" cy="3.9" r="3.05" fill="none" stroke="#222" stroke-width="1.35"/><path d="M6.2 6.2 L8.8 8.8" stroke="#222" stroke-width="1.6" stroke-linecap="round"/></svg>
<div class="b " style="left:345.80px;top:264.30px;width:49.70px;height:15.50px;background:#fff;border:1px solid #cfcfcf;box-sizing:border-box;"></div>
<span class="t " style="left:349.50px;top:266.00px;font-size:9.40px;line-height:11px;color:#909090;letter-spacing:-0.220px;-webkit-text-stroke:0.35px #909090;">Type</span>
<svg class="b" style="left:416.80px;top:267.00px;" width="10" height="10" viewBox="0 0 10 10"><circle cx="3.9" cy="3.9" r="3.05" fill="none" stroke="#222" stroke-width="1.35"/><path d="M6.2 6.2 L8.8 8.8" stroke="#222" stroke-width="1.6" stroke-linecap="round"/></svg>
<div class="b " style="left:429.00px;top:264.30px;width:25.50px;height:15.50px;background:#fff;border:1px solid #cfcfcf;box-sizing:border-box;"></div>
<span class="t " style="left:432.70px;top:266.00px;font-size:9.40px;line-height:11px;color:#909090;letter-spacing:0.173px;-webkit-text-stroke:0.35px #909090;">Slit</span>
<svg class="b" style="left:475.30px;top:267.00px;" width="10" height="10" viewBox="0 0 10 10"><circle cx="3.9" cy="3.9" r="3.05" fill="none" stroke="#222" stroke-width="1.35"/><path d="M6.2 6.2 L8.8 8.8" stroke="#222" stroke-width="1.6" stroke-linecap="round"/></svg>
<div class="b " style="left:488.00px;top:264.30px;width:55.80px;height:15.50px;background:#fff;border:1px solid #cfcfcf;box-sizing:border-box;"></div>
<span class="t " style="left:491.70px;top:266.00px;font-size:9.40px;line-height:11px;color:#909090;letter-spacing:-0.074px;-webkit-text-stroke:0.35px #909090;">XFOV start</span>
<svg class="b" style="left:564.30px;top:267.00px;" width="10" height="10" viewBox="0 0 10 10"><circle cx="3.9" cy="3.9" r="3.05" fill="none" stroke="#222" stroke-width="1.35"/><path d="M6.2 6.2 L8.8 8.8" stroke="#222" stroke-width="1.6" stroke-linecap="round"/></svg>
<div class="b " style="left:577.00px;top:264.30px;width:55.50px;height:15.50px;background:#fff;border:1px solid #cfcfcf;box-sizing:border-box;"></div>
<span class="t " style="left:580.70px;top:266.00px;font-size:9.40px;line-height:11px;color:#909090;letter-spacing:-0.115px;-webkit-text-stroke:0.35px #909090;">XFOV width</span>
<svg class="b" style="left:653.60px;top:267.00px;" width="10" height="10" viewBox="0 0 10 10"><circle cx="3.9" cy="3.9" r="3.05" fill="none" stroke="#222" stroke-width="1.35"/><path d="M6.2 6.2 L8.8 8.8" stroke="#222" stroke-width="1.6" stroke-linecap="round"/></svg>
<div class="b " style="left:666.30px;top:264.30px;width:50.50px;height:15.50px;background:#fff;border:1px solid #cfcfcf;box-sizing:border-box;"></div>
<span class="t " style="left:670.00px;top:266.00px;font-size:9.40px;line-height:11px;color:#909090;letter-spacing:-0.247px;-webkit-text-stroke:0.35px #909090;">XFOV step</span>
<svg class="b" style="left:737.80px;top:267.00px;" width="10" height="10" viewBox="0 0 10 10"><circle cx="3.9" cy="3.9" r="3.05" fill="none" stroke="#222" stroke-width="1.35"/><path d="M6.2 6.2 L8.8 8.8" stroke="#222" stroke-width="1.6" stroke-linecap="round"/></svg>
<div class="b " style="left:750.50px;top:264.30px;width:28.30px;height:15.50px;background:#fff;border:1px solid #cfcfcf;box-sizing:border-box;"></div>
<span class="t " style="left:754.20px;top:266.00px;font-size:9.40px;line-height:11px;color:#909090;letter-spacing:-0.711px;-webkit-text-stroke:0.35px #909090;">YFOV</span>
<svg class="b" style="left:799.80px;top:267.00px;" width="10" height="10" viewBox="0 0 10 10"><circle cx="3.9" cy="3.9" r="3.05" fill="none" stroke="#222" stroke-width="1.35"/><path d="M6.2 6.2 L8.8 8.8" stroke="#222" stroke-width="1.6" stroke-linecap="round"/></svg>
<div class="b " style="left:812.40px;top:264.30px;width:60.30px;height:15.50px;background:#fff;border:1px solid #cfcfcf;box-sizing:border-box;"></div>
<span class="t " style="left:816.10px;top:266.00px;font-size:9.40px;line-height:11px;color:#909090;letter-spacing:-0.138px;-webkit-text-stroke:0.35px #909090;">YFOV height</span>
<svg class="b" style="left:894.10px;top:267.00px;" width="10" height="10" viewBox="0 0 10 10"><circle cx="3.9" cy="3.9" r="3.05" fill="none" stroke="#222" stroke-width="1.35"/><path d="M6.2 6.2 L8.8 8.8" stroke="#222" stroke-width="1.6" stroke-linecap="round"/></svg>
<div class="b " style="left:906.00px;top:264.30px;width:55.70px;height:15.50px;background:#fff;border:1px solid #cfcfcf;box-sizing:border-box;"></div>
<span class="t " style="left:909.70px;top:266.00px;font-size:9.40px;line-height:11px;color:#909090;letter-spacing:-0.079px;-webkit-text-stroke:0.35px #909090;">YFOV start</span>
<svg class="b" style="left:983.10px;top:267.00px;" width="10" height="10" viewBox="0 0 10 10"><circle cx="3.9" cy="3.9" r="3.05" fill="none" stroke="#222" stroke-width="1.35"/><path d="M6.2 6.2 L8.8 8.8" stroke="#222" stroke-width="1.6" stroke-linecap="round"/></svg>
<div class="b " style="left:995.00px;top:264.30px;width:36.00px;height:15.50px;background:#fff;border:1px solid #cfcfcf;box-sizing:border-box;"></div>
<span class="t " style="left:998.70px;top:266.00px;font-size:9.40px;line-height:11px;color:#909090;letter-spacing:-0.169px;-webkit-text-stroke:0.35px #909090;">Repeat</span>
<svg class="b" style="left:1051.50px;top:267.00px;" width="10" height="10" viewBox="0 0 10 10"><circle cx="3.9" cy="3.9" r="3.05" fill="none" stroke="#222" stroke-width="1.35"/><path d="M6.2 6.2 L8.8 8.8" stroke="#222" stroke-width="1.6" stroke-linecap="round"/></svg>
<div class="b " style="left:1064.30px;top:264.30px;width:25.00px;height:15.50px;background:#fff;border:1px solid #cfcfcf;box-sizing:border-box;"></div>
<span class="t " style="left:1068.00px;top:266.00px;font-size:9.40px;line-height:11px;color:#909090;letter-spacing:-0.212px;-webkit-text-stroke:0.35px #909090;">Dark</span>
<svg class="b" style="left:1110.80px;top:267.00px;" width="10" height="10" viewBox="0 0 10 10"><circle cx="3.9" cy="3.9" r="3.05" fill="none" stroke="#222" stroke-width="1.35"/><path d="M6.2 6.2 L8.8 8.8" stroke="#222" stroke-width="1.6" stroke-linecap="round"/></svg>
<div class="b " style="left:1123.30px;top:264.30px;width:45.00px;height:15.50px;background:#fff;border:1px solid #cfcfcf;box-sizing:border-box;"></div>
<span class="t " style="left:1127.00px;top:266.00px;font-size:9.40px;line-height:11px;color:#909090;letter-spacing:-0.089px;-webkit-text-stroke:0.35px #909090;">Exposure</span>
<div class="b " style="left:13.30px;top:285.00px;width:44.70px;height:17.20px;background:#f3f3f3;border:1px solid #e3e3e3;border-bottom:none;box-sizing:border-box;"></div>
<div class="b " style="left:523.20px;top:285.00px;width:69.60px;height:17.20px;background:#f3f3f3;border:1px solid #e3e3e3;border-bottom:none;box-sizing:border-box;"></div>
<div class="b " style="left:597.00px;top:285.00px;width:57.30px;height:17.20px;background:#f3f3f3;border:1px solid #e3e3e3;border-bottom:none;box-sizing:border-box;"></div>
<div class="b " style="left:1003.30px;top:285.00px;width:29.40px;height:17.20px;background:#f3f3f3;border:1px solid #e3e3e3;border-bottom:none;box-sizing:border-box;"></div>
<span class="t " style="left:18.00px;top:288.00px;font-size:8.80px;line-height:10px;color:#3b78b4;letter-spacing:-0.404px;">Quiet Sun</span>
<span class="t " style="left:63.00px;top:288.00px;font-size:8.80px;line-height:10px;color:#3b78b4;letter-spacing:-0.300px;">Active Region</span>
<span class="t " style="left:122.80px;top:288.00px;font-size:8.80px;line-height:10px;color:#3b78b4;letter-spacing:-0.297px;">Coronal Hole</span>
<span class="t " style="left:528.00px;top:288.00px;font-size:8.80px;line-height:10px;color:#3b78b4;letter-spacing:-0.250px;">Display windows</span>
<span class="t " style="left:601.30px;top:288.00px;font-size:8.80px;line-height:10px;color:#3b78b4;letter-spacing:-0.317px;">Display curve</span>
<span class="t " style="left:1007.30px;top:288.00px;font-size:8.80px;line-height:10px;color:#3b78b4;letter-spacing:-0.296px;">Pixels</span>
<span class="t " style="left:1039.00px;top:288.00px;font-size:8.80px;line-height:10px;color:#3b78b4;letter-spacing:-0.207px;">Ångström</span>
<span class="t " style="left:1084.30px;top:288.00px;font-size:8.80px;line-height:10px;color:#3b78b4;letter-spacing:-0.160px;">Ångström 2</span>
<span class="t " style="left:1137.30px;top:288.00px;font-size:8.80px;line-height:10px;color:#3b78b4;letter-spacing:-0.280px;">No scale</span>
<div class="b " style="left:13.10px;top:302.20px;width:1161.20px;height:151.20px;background:linear-gradient(90deg,#fe9f6d 0.0px,#fd9a6a 0.5px,#fb8560 1.0px,#f4675c 1.5px,#de4968 2.0px,#ba3878 2.5px,#942c80 3.0px,#721f81 3.5px,#54137d 4.0px,#38106c 4.5px,#221150 5.0px,#150e38 5.5px,#0d0a29 6.0px,#07061c 6.5px,#050416 7.0px,#030312 7.5px,#02020d 8.0px,#02020d 8.5px,#02020b 9.0px,#02020b 24.0px,#02020d 24.5px,#03030f 25.0px,#050416 25.5px,#0a0822 26.0px,#130d34 26.5px,#241253 27.0px,#3f0f72 27.5px,#601880 28.0px,#812581 28.5px,#a02f7f 29.0px,#b73779 29.5px,#bf3a77 30.0px,#b73779 30.5px,#a02f7f 31.0px,#812581 31.5px,#601880 32.0px,#3f0f72 32.5px,#241253 33.0px,#130d34 33.5px,#0b0924 34.0px,#140e36 34.5px,#1d1147 35.0px,#21114e 35.5px,#20114b 36.0px,#180f3d 36.5px,#0e0b2b 37.0px,#07061c 37.5px,#040414 38.0px,#02020d 38.5px,#02020b 39.0px,#02020b 91.5px,#02020d 92.0px,#030312 92.5px,#06051a 93.0px,#0e0b2b 93.5px,#1c1044 94.0px,#311165 94.5px,#451077 95.0px,#4f127b 95.5px,#4c117a 96.0px,#3d0f71 96.5px,#271258 97.0px,#150e38 97.5px,#0a0822 98.0px,#050416 98.5px,#03030f 99.0px,#02020d 99.5px,#02020b 100.0px,#02020b 114.5px,#02020d 115.0px,#03030f 115.5px,#050416 116.0px,#0a0822 116.5px,#140e36 117.0px,#221150 117.5px,#341069 118.0px,#400f74 118.5px,#420f75 119.0px,#38106c 119.5px,#251255 120.0px,#160f3b 120.5px,#0b0924 121.0px,#060518 121.5px,#030312 122.0px,#02020d 122.5px,#02020b 123.0px,#02020b 130.0px,#02020d 130.5px,#03030f 131.0px,#050416 131.5px,#0a0822 132.0px,#140e36 132.5px,#251255 133.0px,#3b0f70 133.5px,#4c117a 134.0px,#4f127b 134.5px,#471078 135.0px,#331067 135.5px,#1e1149 136.0px,#100b2d 136.5px,#07061c 137.0px,#040414 137.5px,#02020d 138.0px,#02020d 138.5px,#02020b 139.0px,#02020b 143.0px,#02020d 143.5px,#02020d 154.5px,#03030f 155.0px,#03030f 155.5px,#040414 156.0px,#060518 156.5px,#07061c 157.0px,#08071e 157.5px,#090720 158.0px,#08071e 158.5px,#06051a 159.0px,#050416 159.5px,#030312 160.0px,#03030f 160.5px,#03030f 174.5px,#030312 175.0px,#030312 175.5px,#050416 176.0px,#060518 176.5px,#07061c 177.0px,#08071e 177.5px,#090720 178.0px,#08071e 178.5px,#06051a 179.0px,#060518 179.5px,#040414 180.0px,#030312 180.5px,#030312 189.0px,#040414 189.5px,#040414 190.0px,#050416 190.5px,#060518 191.0px,#08071e 191.5px,#0c0926 192.0px,#130d34 192.5px,#1e1149 193.0px,#311165 193.5px,#4a1079 194.0px,#681c81 194.5px,#882781 195.0px,#aa337d 195.5px,#c53c74 196.0px,#db476a 196.5px,#e44f64 197.0px,#e34e65 197.5px,#d8456c 198.0px,#c03a76 198.5px,#a3307e 199.0px,#812581 199.5px,#621980 200.0px,#451077 200.5px,#2d1161 201.0px,#1c1044 201.5px,#120d31 202.0px,#0b0924 202.5px,#08071e 203.0px,#06051a 203.5px,#050416 204.0px,#050416 204.5px,#040414 205.0px,#040414 211.0px,#050416 211.5px,#050416 215.5px,#060518 216.0px,#060518 216.5px,#07061c 217.0px,#090720 217.5px,#0b0924 218.0px,#0b0924 219.0px,#0a0822 219.5px,#08071e 220.0px,#06051a 220.5px,#060518 221.0px,#060518 221.5px,#050416 222.0px,#050416 228.0px,#060518 228.5px,#060518 230.5px,#07061c 231.0px,#0a0822 231.5px,#110c2f 232.0px,#1c1044 232.5px,#2a115c 233.0px,#38106c 233.5px,#3b0f70 234.0px,#331067 234.5px,#241253 235.0px,#160f3b 235.5px,#0e0b2b 236.0px,#090720 236.5px,#08071e 237.0px,#0b0924 237.5px,#120d31 238.0px,#1a1042 238.5px,#251255 239.0px,#2d1161 239.5px,#2c115f 240.0px,#241253 240.5px,#19103f 241.0px,#110c2f 241.5px,#0a0822 242.0px,#07061c 242.5px,#06051a 243.0px,#06051a 243.5px,#060518 244.0px,#060518 246.0px,#06051a 246.5px,#06051a 265.5px,#07061c 266.0px,#07061c 272.0px,#08071e 272.5px,#0a0822 273.0px,#0c0926 273.5px,#0e0b2b 274.0px,#110c2f 274.5px,#120d31 275.0px,#100b2d 275.5px,#0d0a29 276.0px,#0b0924 276.5px,#090720 277.0px,#08071e 277.5px,#07061c 278.0px,#07061c 285.0px,#08071e 285.5px,#08071e 292.5px,#0a0822 293.0px,#0c0926 293.5px,#110c2f 294.0px,#180f3d 294.5px,#20114b 295.0px,#29115a 295.5px,#2d1161 296.0px,#2c115f 296.5px,#241253 297.0px,#1a1042 297.5px,#130d34 298.0px,#0d0a29 298.5px,#0b0924 299.0px,#090720 299.5px,#090720 300.0px,#08071e 300.5px,#08071e 304.5px,#090720 305.0px,#090720 324.0px,#0a0822 324.5px,#0a0822 330.5px,#0b0924 331.0px,#0d0a29 331.5px,#110c2f 332.0px,#180f3d 332.5px,#21114e 333.0px,#2d1161 333.5px,#38106c 334.0px,#3b0f70 334.5px,#341069 335.0px,#29115a 335.5px,#1d1147 336.0px,#150e38 336.5px,#100b2d 337.0px,#0c0926 337.5px,#0b0924 338.0px,#0a0822 338.5px,#0a0822 340.5px,#0b0924 341.0px,#0b0924 341.5px,#0d0a29 342.0px,#100b2d 342.5px,#150e38 343.0px,#1c1044 343.5px,#241253 344.0px,#2c115f 344.5px,#2d1161 345.0px,#29115a 345.5px,#21114e 346.0px,#19103f 346.5px,#130d34 347.0px,#0e0b2b 347.5px,#0c0926 348.0px,#0b0924 348.5px,#0b0924 358.0px,#0c0926 358.5px,#0c0926 373.5px,#0d0a29 374.0px,#0d0a29 389.0px,#0e0b2b 389.5px,#0e0b2b 405.0px,#100b2d 405.5px,#100b2d 417.5px,#110c2f 418.0px,#110c2f 418.5px,#120d31 419.0px,#130d34 419.5px,#160f3b 420.0px,#1c1044 420.5px,#20114b 421.0px,#241253 421.5px,#251255 422.0px,#221150 422.5px,#1e1149 423.0px,#19103f 423.5px,#150e38 424.0px,#130d34 424.5px,#120d31 425.0px,#110c2f 425.5px,#110c2f 426.0px,#120d31 426.5px,#130d34 427.0px,#150e38 427.5px,#1c1044 428.0px,#241253 428.5px,#331067 429.0px,#3f0f72 429.5px,#471078 430.0px,#451077 430.5px,#3d0f71 431.0px,#2f1163 431.5px,#221150 432.0px,#1a1042 432.5px,#150e38 433.0px,#130d34 433.5px,#120d31 434.0px,#120d31 434.5px,#110c2f 435.0px,#110c2f 436.0px,#120d31 436.5px,#120d31 451.5px,#130d34 452.0px,#130d34 467.5px,#140e36 468.0px,#140e36 480.5px,#150e38 481.0px,#150e38 481.5px,#180f3d 482.0px,#1a1042 482.5px,#1d1147 483.0px,#21114e 483.5px,#241253 484.0px,#251255 484.5px,#241253 485.0px,#20114b 485.5px,#1c1044 486.0px,#19103f 486.5px,#160f3b 487.0px,#150e38 487.5px,#150e38 498.5px,#160f3b 499.0px,#160f3b 514.0px,#180f3d 514.5px,#180f3d 530.0px,#19103f 530.5px,#19103f 532.0px,#1a1042 532.5px,#1d1147 533.0px,#21114e 533.5px,#2a115c 534.0px,#36106b 534.5px,#440f76 535.0px,#4e117b 535.5px,#4f127b 536.0px,#4a1079 536.5px,#3f0f72 537.0px,#311165 537.5px,#251255 538.0px,#20114b 538.5px,#1c1044 539.0px,#1a1042 539.5px,#19103f 540.0px,#19103f 545.5px,#1a1042 546.0px,#1a1042 547.5px,#1c1044 548.0px,#20114b 548.5px,#251255 549.0px,#311165 549.5px,#400f74 550.0px,#52137c 550.5px,#621980 551.0px,#6d1d81 551.5px,#701f81 552.0px,#6a1c81 552.5px,#5c167f 553.0px,#4c117a 553.5px,#390f6e 554.0px,#2c115f 554.5px,#221150 555.0px,#1e1149 555.5px,#1c1044 556.0px,#1c1044 556.5px,#1a1042 557.0px,#1a1042 561.0px,#1c1044 561.5px,#1c1044 574.5px,#1d1147 575.0px,#1d1147 575.5px,#20114b 576.0px,#221150 576.5px,#2a115c 577.0px,#341069 577.5px,#440f76 578.0px,#51127c 578.5px,#5a167e 579.0px,#5c167f 579.5px,#57157e 580.0px,#4c117a 580.5px,#3d0f71 581.0px,#311165 581.5px,#271258 582.0px,#21114e 582.5px,#1e1149 583.0px,#1d1147 583.5px,#1d1147 592.0px,#1e1149 592.5px,#1e1149 593.5px,#20114b 594.0px,#21114e 594.5px,#251255 595.0px,#2d1161 595.5px,#3b0f70 596.0px,#4e117b 596.5px,#621980 597.0px,#752181 597.5px,#842681 598.0px,#8c2981 598.5px,#892881 599.0px,#7c2382 599.5px,#6a1c81 600.0px,#56147d 600.5px,#420f75 601.0px,#331067 601.5px,#29115a 602.0px,#241253 602.5px,#21114e 603.0px,#20114b 603.5px,#1e1149 604.0px,#1e1149 608.0px,#20114b 608.5px,#20114b 610.0px,#221150 610.5px,#271258 611.0px,#2d1161 611.5px,#3b0f70 612.0px,#4a1079 612.5px,#57157e 613.0px,#621980 613.5px,#641a80 614.0px,#5f187f 614.5px,#52137c 615.0px,#440f76 615.5px,#36106b 616.0px,#2c115f 616.5px,#251255 617.0px,#221150 617.5px,#221150 618.0px,#251255 618.5px,#2c115f 619.0px,#38106c 619.5px,#471078 620.0px,#5d177f 620.5px,#762181 621.0px,#932b80 621.5px,#ad347c 622.0px,#c23b75 622.5px,#ca3e72 623.0px,#c73d73 623.5px,#b73779 624.0px,#9e2f7f 624.5px,#812581 625.0px,#671b80 625.5px,#51127c 626.0px,#3d0f71 626.5px,#311165 627.0px,#29115a 627.5px,#241253 628.0px,#221150 628.5px,#21114e 629.0px,#21114e 638.5px,#221150 639.0px,#221150 652.0px,#241253 652.5px,#241253 664.5px,#251255 665.0px,#251255 666.5px,#271258 667.0px,#2a115c 667.5px,#311165 668.0px,#390f6e 668.5px,#451077 669.0px,#54137d 669.5px,#601880 670.0px,#6b1d81 670.5px,#701f81 671.0px,#6e1e81 671.5px,#651a80 672.0px,#59157e 672.5px,#4c117a 673.0px,#3f0f72 673.5px,#341069 674.0px,#2d1161 674.5px,#2a115c 675.0px,#271258 675.5px,#271258 676.5px,#251255 677.0px,#251255 677.5px,#271258 678.0px,#271258 691.0px,#29115a 691.5px,#29115a 704.0px,#2a115c 704.5px,#2a115c 717.0px,#2c115f 717.5px,#2c115f 729.0px,#2d1161 729.5px,#2d1161 730.5px,#2f1163 731.0px,#311165 731.5px,#36106b 732.0px,#3d0f71 732.5px,#471078 733.0px,#56147d 733.5px,#651a80 734.0px,#782281 734.5px,#8b2981 735.0px,#9c2e7f 735.5px,#a6317d 736.0px,#aa337d 736.5px,#a3307e 737.0px,#962c80 737.5px,#842681 738.0px,#721f81 738.5px,#5f187f 739.0px,#4f127b 739.5px,#440f76 740.0px,#3b0f70 740.5px,#341069 741.0px,#311165 741.5px,#2f1163 742.0px,#311165 742.5px,#341069 743.0px,#390f6e 743.5px,#440f76 744.0px,#51127c 744.5px,#621980 745.0px,#752181 745.5px,#862781 746.0px,#912b81 746.5px,#942c80 747.0px,#8e2a81 747.5px,#802582 748.0px,#6d1d81 748.5px,#5c167f 749.0px,#4c117a 749.5px,#400f74 750.0px,#38106c 750.5px,#331067 751.0px,#311165 751.5px,#311165 752.5px,#341069 753.0px,#38106c 753.5px,#3d0f71 754.0px,#451077 754.5px,#52137c 755.0px,#621980 755.5px,#762181 756.0px,#8e2a81 756.5px,#a8327d 757.0px,#c43c75 757.5px,#dc4869 758.0px,#eb5760 758.5px,#f2645c 759.0px,#f3655c 759.5px,#f05f5e 760.0px,#e75263 760.5px,#d3436e 761.0px,#ba3878 761.5px,#9e2f7f 762.0px,#842681 762.5px,#6e1e81 763.0px,#5c167f 763.5px,#4e117b 764.0px,#440f76 764.5px,#3b0f70 765.0px,#38106c 765.5px,#341069 766.0px,#331067 766.5px,#311165 767.0px,#311165 774.5px,#331067 775.0px,#331067 776.0px,#341069 776.5px,#38106c 777.0px,#3f0f72 777.5px,#491078 778.0px,#57157e 778.5px,#6a1c81 779.0px,#7e2482 779.5px,#912b81 780.0px,#9e2f7f 780.5px,#a1307e 781.0px,#992d80 781.5px,#892881 782.0px,#762181 782.5px,#621980 783.0px,#51127c 783.5px,#451077 784.0px,#3d0f71 784.5px,#38106c 785.0px,#341069 785.5px,#341069 786.0px,#331067 786.5px,#331067 791.0px,#341069 791.5px,#341069 794.5px,#36106b 795.0px,#38106c 795.5px,#3f0f72 796.0px,#471078 796.5px,#56147d 797.0px,#651a80 797.5px,#752181 798.0px,#812581 798.5px,#842681 799.0px,#7c2382 799.5px,#701f81 800.0px,#5f187f 800.5px,#4f127b 801.0px,#440f76 801.5px,#3b0f70 802.0px,#38106c 802.5px,#36106b 803.0px,#36106b 803.5px,#341069 804.0px,#341069 806.5px,#36106b 807.0px,#36106b 808.0px,#38106c 808.5px,#390f6e 809.0px,#400f74 809.5px,#4a1079 810.0px,#5a167e 810.5px,#6e1e81 811.0px,#882781 811.5px,#a02f7f 812.0px,#b2357b 812.5px,#b5367a 813.0px,#ab337c 813.5px,#982d80 814.0px,#7e2482 814.5px,#671b80 815.0px,#54137d 815.5px,#451077 816.0px,#3f0f72 816.5px,#390f6e 817.0px,#3d0f71 817.5px,#440f76 818.0px,#4e117b 818.5px,#5c167f 819.0px,#6e1e81 819.5px,#8b2981 820.0px,#ad347c 820.5px,#d6456c 821.0px,#f4695c 821.5px,#fd9a6a 822.0px,#fec488 822.5px,#fde3a5 823.0px,#fcf0b2 823.5px,#fdebac 824.0px,#fed395 824.5px,#feac76 825.0px,#fa7d5e 825.5px,#e55064 826.0px,#bd3977 826.5px,#982d80 827.0px,#792282 827.5px,#641a80 828.0px,#54137d 828.5px,#491078 829.0px,#400f74 829.5px,#3d0f71 830.0px,#390f6e 830.5px,#390f6e 831.0px,#38106c 831.5px,#38106c 838.0px,#390f6e 838.5px,#390f6e 853.5px,#3b0f70 854.0px,#3b0f70 869.0px,#3d0f71 869.5px,#3d0f71 884.5px,#3f0f72 885.0px,#3f0f72 887.0px,#400f74 887.5px,#440f76 888.0px,#471078 888.5px,#4e117b 889.0px,#59157e 889.5px,#681c81 890.0px,#7e2482 890.5px,#9c2e7f 891.0px,#c23b75 891.5px,#e75263 892.0px,#fa7f5e 892.5px,#feae77 893.0px,#fed395 893.5px,#fdebac 894.0px,#fcf0b2 894.5px,#fde3a5 895.0px,#fec68a 895.5px,#fe9d6c 896.0px,#f66c5c 896.5px,#d9466b 897.0px,#b2357b 897.5px,#902a81 898.0px,#762181 898.5px,#621980 899.0px,#56147d 899.5px,#4c117a 900.0px,#471078 900.5px,#440f76 901.0px,#420f75 901.5px,#400f74 902.0px,#400f74 914.5px,#420f75 915.0px,#420f75 916.0px,#451077 916.5px,#491078 917.0px,#51127c 917.5px,#5c167f 918.0px,#6a1c81 918.5px,#782281 919.0px,#812581 919.5px,#842681 920.0px,#7e2482 920.5px,#732081 921.0px,#651a80 921.5px,#59157e 922.0px,#4e117b 922.5px,#491078 923.0px,#451077 923.5px,#440f76 924.0px,#420f75 924.5px,#420f75 931.5px,#440f76 932.0px,#440f76 945.0px,#451077 945.5px,#471078 946.0px,#4a1079 946.5px,#51127c 947.0px,#5a167e 947.5px,#681c81 948.0px,#762181 948.5px,#812581 949.0px,#842681 949.5px,#7e2482 950.0px,#721f81 950.5px,#641a80 951.0px,#57157e 951.5px,#4e117b 952.0px,#491078 952.5px,#471078 953.0px,#451077 953.5px,#451077 963.0px,#471078 963.5px,#471078 965.0px,#491078 965.5px,#4a1079 966.0px,#51127c 966.5px,#59157e 967.0px,#651a80 967.5px,#701f81 968.0px,#792282 968.5px,#7c2382 969.0px,#762181 969.5px,#6d1d81 970.0px,#601880 970.5px,#56147d 971.0px,#4f127b 971.5px,#4a1079 972.0px,#491078 972.5px,#471078 973.0px,#471078 978.5px,#491078 979.0px,#491078 994.0px,#4a1079 994.5px,#4a1079 1010.0px,#4c117a 1010.5px,#4c117a 1020.5px,#4e117b 1021.0px,#4f127b 1021.5px,#52137c 1022.0px,#59157e 1022.5px,#641a80 1023.0px,#752181 1023.5px,#902a81 1024.0px,#b2357b 1024.5px,#db476a 1025.0px,#f56b5c 1025.5px,#fd9668 1026.0px,#feb078 1026.5px,#feb77e 1027.0px,#fea973 1027.5px,#fb8761 1028.0px,#ed5a5f 1028.5px,#ca3e72 1029.0px,#a5317e 1029.5px,#842681 1030.0px,#6e1e81 1030.5px,#5f187f 1031.0px,#57157e 1031.5px,#52137c 1032.0px,#4f127b 1032.5px,#4e117b 1033.0px,#4e117b 1041.0px,#4f127b 1041.5px,#4f127b 1050.5px,#51127c 1051.0px,#52137c 1051.5px,#56147d 1052.0px,#5c167f 1052.5px,#651a80 1053.0px,#6e1e81 1053.5px,#782281 1054.0px,#7c2382 1054.5px,#792282 1055.0px,#732081 1055.5px,#681c81 1056.0px,#5f187f 1056.5px,#59157e 1057.0px,#54137d 1057.5px,#51127c 1058.0px,#51127c 1074.0px,#52137c 1074.5px,#52137c 1090.0px,#54137d 1090.5px,#54137d 1103.5px,#56147d 1104.0px,#56147d 1104.5px,#57157e 1105.0px,#5c167f 1105.5px,#621980 1106.0px,#6d1d81 1106.5px,#7c2382 1107.0px,#942c80 1107.5px,#b3367a 1108.0px,#d3436e 1108.5px,#ee5b5e 1109.0px,#f8765c 1109.5px,#fb8761 1110.0px,#fb8560 1110.5px,#f7725c 1111.0px,#ea5661 1111.5px,#cf4070 1112.0px,#ad347c 1112.5px,#902a81 1113.0px,#792282 1113.5px,#6a1c81 1114.0px,#601880 1114.5px,#5c167f 1115.0px,#59157e 1115.5px,#57157e 1116.0px,#56147d 1116.5px,#56147d 1119.5px,#57157e 1120.0px,#57157e 1120.5px,#59157e 1121.0px,#5a167e 1121.5px,#601880 1122.0px,#681c81 1122.5px,#782281 1123.0px,#8e2a81 1123.5px,#ad347c 1124.0px,#d0416f 1124.5px,#ef5d5e 1125.0px,#fb835f 1125.5px,#fe9f6d 1126.0px,#fea973 1126.5px,#fe9f6d 1127.0px,#fb835f 1127.5px,#ef5d5e 1128.0px,#d0416f 1128.5px,#ad347c 1129.0px,#8e2a81 1129.5px,#782281 1130.0px,#6a1c81 1130.5px,#601880 1131.0px,#5c167f 1131.5px,#59157e 1132.0px,#59157e 1132.5px,#57157e 1133.0px,#57157e 1139.0px,#59157e 1139.5px,#59157e 1155.0px,#5a167e 1155.5px,#5a167e 1156.5px,#5c167f 1157.0px,#621980 1157.5px,#701f81 1158.0px,#8e2a81 1158.5px,#c23b75 1159.0px,#f66e5c 1159.5px,#febd82 1160.0px,#fdebac 1160.5px,#fde5a7 1161.0px,#feae77 1161.5px);"></div>
<div class="b " style="left:13.10px;top:468.00px;width:1161.20px;height:151.40px;background:linear-gradient(90deg,#f9795d 0.0px,#f9795d 0.5px,#f9785d 1.0px,#f9785d 1.5px,#f8765c 2.0px,#f7705c 2.5px,#f56b5c 3.0px,#f2625d 3.5px,#eb5760 4.0px,#e04c67 4.5px,#d2426f 5.0px,#bd3977 5.5px,#a6317d 6.0px,#8e2a81 6.5px,#762181 7.0px,#5f187f 7.5px,#4a1079 8.0px,#36106b 8.5px,#271258 9.0px,#2f1163 9.5px,#451077 10.0px,#5d177f 10.5px,#721f81 11.0px,#802582 11.5px,#842681 12.0px,#7b2382 12.5px,#6a1c81 13.0px,#52137c 13.5px,#390f6e 14.0px,#251255 14.5px,#19103f 15.0px,#120d31 15.5px,#0d0a29 16.0px,#0b0924 16.5px,#0c0926 17.0px,#0e0b2b 17.5px,#140e36 18.0px,#1e1149 18.5px,#2d1161 19.0px,#420f75 19.5px,#54137d 20.0px,#601880 20.5px,#641a80 21.0px,#5c167f 21.5px,#4e117b 22.0px,#38106c 22.5px,#241253 23.0px,#180f3d 23.5px,#100b2d 24.0px,#0c0926 24.5px,#090720 25.0px,#08071e 25.5px,#08071e 26.5px,#07061c 27.0px,#07061c 31.0px,#06051a 31.5px,#06051a 33.0px,#07061c 33.5px,#07061c 38.5px,#08071e 39.0px,#08071e 43.0px,#090720 43.5px,#090720 45.5px,#0a0822 46.0px,#0a0822 47.5px,#0b0924 48.0px,#0b0924 49.0px,#0c0926 49.5px,#0d0a29 50.0px,#0d0a29 50.5px,#0e0b2b 51.0px,#100b2d 51.5px,#110c2f 52.0px,#120d31 52.5px,#130d34 53.0px,#140e36 53.5px,#160f3b 54.0px,#19103f 54.5px,#1a1042 55.0px,#1d1147 55.5px,#21114e 56.0px,#241253 56.5px,#271258 57.0px,#2c115f 57.5px,#311165 58.0px,#36106b 58.5px,#3b0f70 59.0px,#400f74 59.5px,#451077 60.0px,#4c117a 60.5px,#51127c 61.0px,#56147d 61.5px,#5a167e 62.0px,#601880 62.5px,#651a80 63.0px,#812581 63.5px,#b2357b 64.0px,#e04c67 64.5px,#f9785d 65.0px,#fea772 65.5px,#feca8d 66.0px,#fde3a5 66.5px,#fcf2b4 67.0px,#fcfbbd 67.5px,#fcfdbf 68.0px,#fcfdbf 69.0px,#fcfbbd 69.5px,#fcf6b8 70.0px,#fde9aa 70.5px,#fed597 71.0px,#feb67c 71.5px,#fc8a62 72.0px,#ed5a5f 72.5px,#c43c75 73.0px,#932b80 73.5px,#681c81 74.0px,#601880 74.5px,#5c167f 75.0px,#57157e 75.5px,#51127c 76.0px,#4c117a 76.5px,#471078 77.0px,#400f74 77.5px,#3b0f70 78.0px,#36106b 78.5px,#311165 79.0px,#2c115f 79.5px,#271258 80.0px,#241253 80.5px,#251255 81.0px,#38106c 81.5px,#4a1079 82.0px,#56147d 82.5px,#57157e 83.0px,#51127c 83.5px,#420f75 84.0px,#2f1163 84.5px,#20114b 85.0px,#140e36 85.5px,#0d0a29 86.0px,#0c0926 86.5px,#0b0924 87.0px,#0a0822 87.5px,#0a0822 88.0px,#090720 88.5px,#090720 89.0px,#08071e 89.5px,#0a0822 90.0px,#0e0b2b 90.5px,#150e38 91.0px,#20114b 91.5px,#2d1161 92.0px,#38106c 92.5px,#3b0f70 93.0px,#341069 93.5px,#271258 94.0px,#1a1042 94.5px,#120d31 95.0px,#0c0926 95.5px,#090720 96.0px,#090720 96.5px,#0b0924 97.0px,#0e0b2b 97.5px,#130d34 98.0px,#19103f 98.5px,#221150 99.0px,#2d1161 99.5px,#3b0f70 100.0px,#471078 100.5px,#51127c 101.0px,#57157e 101.5px,#59157e 102.0px,#54137d 102.5px,#4c117a 103.0px,#400f74 103.5px,#341069 104.0px,#251255 104.5px,#1c1044 105.0px,#130d34 105.5px,#0d0a29 106.0px,#090720 106.5px,#06051a 107.0px,#060518 107.5px,#040414 108.0px,#030312 108.5px,#030312 109.5px,#03030f 110.0px,#03030f 112.0px,#02020d 112.5px,#02020d 114.5px,#02020b 115.0px,#02020b 127.0px,#020109 127.5px,#020109 129.0px,#02020b 129.5px,#02020b 130.5px,#02020d 131.0px,#03030f 131.5px,#060518 132.0px,#0a0822 132.5px,#120d31 133.0px,#1c1044 133.5px,#221150 134.0px,#251255 134.5px,#21114e 135.0px,#180f3d 135.5px,#0e0b2b 136.0px,#07061c 136.5px,#040414 137.0px,#02020d 137.5px,#02020b 138.0px,#02020b 138.5px,#020109 139.0px,#020109 167.0px,#02020b 167.5px,#02020b 168.0px,#03030f 168.5px,#050416 169.0px,#0a0822 169.5px,#120d31 170.0px,#1c1044 170.5px,#271258 171.0px,#2f1163 171.5px,#311165 172.0px,#2c115f 172.5px,#221150 173.0px,#180f3d 173.5px,#0e0b2b 174.0px,#07061c 174.5px,#040414 175.0px,#02020d 175.5px,#02020b 176.0px,#020109 176.5px,#020109 198.0px,#02020b 198.5px,#03030f 199.0px,#060518 199.5px,#0c0926 200.0px,#160f3b 200.5px,#241253 201.0px,#2f1163 201.5px,#311165 202.0px,#2a115c 202.5px,#1e1149 203.0px,#120d31 203.5px,#090720 204.0px,#040414 204.5px,#02020d 205.0px,#020109 205.5px,#020109 213.0px,#010108 213.5px,#010108 227.0px,#020109 227.5px,#020109 228.5px,#02020b 229.0px,#02020b 230.5px,#02020d 231.0px,#02020d 232.0px,#03030f 232.5px,#03030f 234.0px,#030312 234.5px,#030312 235.5px,#040414 236.0px,#040414 236.5px,#050416 237.0px,#050416 237.5px,#06051a 238.0px,#07061c 238.5px,#0a0822 239.0px,#0d0a29 239.5px,#130d34 240.0px,#1c1044 240.5px,#271258 241.0px,#390f6e 241.5px,#4e117b 242.0px,#641a80 242.5px,#792282 243.0px,#8e2a81 243.5px,#a02f7f 244.0px,#ae347b 244.5px,#b5367a 245.0px,#b5367a 245.5px,#ad347c 246.0px,#a02f7f 246.5px,#8e2a81 247.0px,#782281 247.5px,#641a80 248.0px,#4f127b 248.5px,#3b0f70 249.0px,#2a115c 249.5px,#1e1149 250.0px,#160f3b 250.5px,#120d31 251.0px,#0e0b2b 251.5px,#0c0926 252.0px,#0b0924 252.5px,#0a0822 253.0px,#0a0822 254.5px,#0b0924 255.0px,#0c0926 255.5px,#0e0b2b 256.0px,#120d31 256.5px,#160f3b 257.0px,#20114b 257.5px,#2c115f 258.0px,#3f0f72 258.5px,#54137d 259.0px,#6a1c81 259.5px,#812581 260.0px,#982d80 260.5px,#a8327d 261.0px,#b3367a 261.5px,#b5367a 262.0px,#b0357b 262.5px,#a3307e 263.0px,#902a81 263.5px,#792282 264.0px,#621980 264.5px,#4c117a 265.0px,#38106c 265.5px,#4a1079 266.0px,#601880 266.5px,#752181 267.0px,#862781 267.5px,#912b81 268.0px,#942c80 268.5px,#8e2a81 269.0px,#802582 269.5px,#6d1d81 270.0px,#59157e 270.5px,#440f76 271.0px,#2f1163 271.5px,#21114e 272.0px,#180f3d 272.5px,#160f3b 273.0px,#1e1149 273.5px,#29115a 274.0px,#38106c 274.5px,#4a1079 275.0px,#59157e 275.5px,#651a80 276.0px,#6e1e81 276.5px,#701f81 277.0px,#6b1d81 277.5px,#621980 278.0px,#54137d 278.5px,#440f76 279.0px,#331067 279.5px,#241253 280.0px,#1c1044 280.5px,#150e38 281.0px,#110c2f 281.5px,#100b2d 282.0px,#120d31 282.5px,#150e38 283.0px,#1c1044 283.5px,#251255 284.0px,#36106b 284.5px,#4a1079 285.0px,#601880 285.5px,#7b2382 286.0px,#962c80 286.5px,#b2357b 287.0px,#ca3e72 287.5px,#dc4869 288.0px,#e55064 288.5px,#e85362 289.0px,#e34e65 289.5px,#d6456c 290.0px,#c03a76 290.5px,#a6317d 291.0px,#8b2981 291.5px,#701f81 292.0px,#59157e 292.5px,#420f75 293.0px,#311165 293.5px,#221150 294.0px,#1a1042 294.5px,#150e38 295.0px,#130d34 295.5px,#160f3b 296.0px,#1c1044 296.5px,#221150 297.0px,#2a115c 297.5px,#36106b 298.0px,#420f75 298.5px,#4e117b 299.0px,#57157e 299.5px,#5f187f 300.0px,#641a80 300.5px,#641a80 301.0px,#621980 301.5px,#5c167f 302.0px,#54137d 302.5px,#491078 303.0px,#3d0f71 303.5px,#4a1079 304.0px,#54137d 304.5px,#5a167e 305.0px,#5c167f 305.5px,#59157e 306.0px,#51127c 306.5px,#451077 307.0px,#38106c 307.5px,#2c115f 308.0px,#21114e 308.5px,#1a1042 309.0px,#150e38 309.5px,#120d31 310.0px,#110c2f 310.5px,#100b2d 311.0px,#0e0b2b 311.5px,#0e0b2b 319.5px,#100b2d 320.0px,#100b2d 320.5px,#110c2f 321.0px,#120d31 321.5px,#140e36 322.0px,#160f3b 322.5px,#19103f 323.0px,#1d1147 323.5px,#21114e 324.0px,#271258 324.5px,#2c115f 325.0px,#331067 325.5px,#38106c 326.0px,#3d0f71 326.5px,#400f74 327.0px,#440f76 327.5px,#440f76 328.0px,#420f75 328.5px,#3f0f72 329.0px,#3b0f70 329.5px,#341069 330.0px,#2f1163 330.5px,#29115a 331.0px,#221150 331.5px,#1d1147 332.0px,#19103f 332.5px,#150e38 333.0px,#130d34 333.5px,#160f3b 334.0px,#1c1044 334.5px,#20114b 335.0px,#251255 335.5px,#2a115c 336.0px,#2d1161 336.5px,#2d1161 337.0px,#2a115c 337.5px,#251255 338.0px,#20114b 338.5px,#1a1042 339.0px,#140e36 339.5px,#100b2d 340.0px,#0c0926 340.5px,#0a0822 341.0px,#08071e 341.5px,#07061c 342.0px,#06051a 342.5px,#060518 343.0px,#060518 343.5px,#050416 344.0px,#050416 344.5px,#040414 345.0px,#040414 346.0px,#030312 346.5px,#030312 347.5px,#03030f 348.0px,#030312 348.5px,#030312 349.0px,#040414 349.5px,#050416 350.0px,#060518 350.5px,#07061c 351.0px,#090720 351.5px,#0d0a29 352.0px,#120d31 352.5px,#160f3b 353.0px,#1c1044 353.5px,#21114e 354.0px,#241253 354.5px,#251255 355.0px,#241253 355.5px,#21114e 356.0px,#1c1044 356.5px,#160f3b 357.0px,#130d34 357.5px,#100b2d 358.0px,#0c0926 358.5px,#0a0822 359.0px,#090720 359.5px,#08071e 360.0px,#08071e 362.0px,#090720 362.5px,#090720 365.5px,#0a0822 366.0px,#0a0822 366.5px,#0b0924 367.0px,#0b0924 367.5px,#0d0a29 368.0px,#0e0b2b 368.5px,#110c2f 369.0px,#130d34 369.5px,#160f3b 370.0px,#1a1042 370.5px,#20114b 371.0px,#241253 371.5px,#2a115c 372.0px,#2f1163 372.5px,#341069 373.0px,#38106c 373.5px,#390f6e 374.0px,#3b0f70 374.5px,#390f6e 375.0px,#36106b 375.5px,#331067 376.0px,#2d1161 376.5px,#271258 377.0px,#221150 377.5px,#1d1147 378.0px,#19103f 378.5px,#150e38 379.0px,#120d31 379.5px,#100b2d 380.0px,#0d0a29 380.5px,#0c0926 381.0px,#0b0924 381.5px,#0a0822 382.0px,#0a0822 382.5px,#090720 383.0px,#090720 399.5px,#0a0822 400.0px,#0a0822 400.5px,#0b0924 401.0px,#0d0a29 401.5px,#100b2d 402.0px,#130d34 402.5px,#19103f 403.0px,#21114e 403.5px,#2c115f 404.0px,#3d0f71 404.5px,#4e117b 405.0px,#5f187f 405.5px,#701f81 406.0px,#802582 406.5px,#8b2981 407.0px,#932b80 407.5px,#942c80 408.0px,#902a81 408.5px,#882781 409.0px,#792282 409.5px,#6a1c81 410.0px,#59157e 410.5px,#471078 411.0px,#36106b 411.5px,#271258 412.0px,#1d1147 412.5px,#160f3b 413.0px,#120d31 413.5px,#0e0b2b 414.0px,#0c0926 414.5px,#0c0926 415.0px,#110c2f 415.5px,#160f3b 416.0px,#21114e 416.5px,#311165 417.0px,#440f76 417.5px,#52137c 418.0px,#59157e 418.5px,#56147d 419.0px,#4a1079 419.5px,#390f6e 420.0px,#271258 420.5px,#1a1042 421.0px,#19103f 421.5px,#21114e 422.0px,#2c115f 422.5px,#36106b 423.0px,#3b0f70 423.5px,#38106c 424.0px,#311165 424.5px,#251255 425.0px,#1c1044 425.5px,#140e36 426.0px,#100b2d 426.5px,#0c0926 427.0px,#0b0924 427.5px,#0a0822 428.0px,#0a0822 428.5px,#090720 429.0px,#090720 436.5px,#0a0822 437.0px,#0a0822 493.5px,#0b0924 494.0px,#0b0924 499.5px,#0c0926 500.0px,#0e0b2b 500.5px,#120d31 501.0px,#160f3b 501.5px,#1d1147 502.0px,#241253 502.5px,#2a115c 503.0px,#2d1161 503.5px,#2c115f 504.0px,#271258 504.5px,#20114b 505.0px,#19103f 505.5px,#130d34 506.0px,#120d31 506.5px,#180f3d 507.0px,#20114b 507.5px,#2c115f 508.0px,#38106c 508.5px,#400f74 509.0px,#440f76 509.5px,#3f0f72 510.0px,#341069 510.5px,#271258 511.0px,#1d1147 511.5px,#150e38 512.0px,#110c2f 512.5px,#0e0b2b 513.0px,#0c0926 513.5px,#0c0926 524.5px,#0d0a29 525.0px,#0d0a29 528.0px,#0e0b2b 528.5px,#0e0b2b 530.0px,#100b2d 530.5px,#100b2d 531.5px,#110c2f 532.0px,#110c2f 532.5px,#120d31 533.0px,#120d31 533.5px,#130d34 534.0px,#130d34 534.5px,#140e36 535.0px,#140e36 535.5px,#150e38 536.0px,#160f3b 536.5px,#160f3b 537.0px,#180f3d 537.5px,#19103f 538.0px,#1a1042 538.5px,#1a1042 539.0px,#1c1044 539.5px,#1d1147 540.0px,#1d1147 540.5px,#1e1149 541.0px,#20114b 541.5px,#20114b 542.0px,#21114e 542.5px,#221150 543.0px,#221150 543.5px,#241253 544.0px,#241253 545.0px,#251255 545.5px,#251255 546.5px,#2d1161 547.0px,#341069 547.5px,#3d0f71 548.0px,#440f76 548.5px,#4c117a 549.0px,#51127c 549.5px,#56147d 550.0px,#57157e 550.5px,#59157e 551.0px,#57157e 551.5px,#54137d 552.0px,#4f127b 552.5px,#491078 553.0px,#420f75 553.5px,#390f6e 554.0px,#331067 554.5px,#2a115c 555.0px,#241253 555.5px,#1e1149 556.0px,#1a1042 556.5px,#180f3d 557.0px,#180f3d 557.5px,#160f3b 558.0px,#150e38 558.5px,#150e38 559.0px,#140e36 559.5px,#140e36 560.0px,#130d34 560.5px,#130d34 561.5px,#150e38 562.0px,#19103f 562.5px,#1d1147 563.0px,#221150 563.5px,#2a115c 564.0px,#331067 564.5px,#3d0f71 565.0px,#471078 565.5px,#52137c 566.0px,#5a167e 566.5px,#621980 567.0px,#681c81 567.5px,#6b1d81 568.0px,#6b1d81 568.5px,#6a1c81 569.0px,#671b80 569.5px,#5f187f 570.0px,#621980 570.5px,#732081 571.0px,#812581 571.5px,#882781 572.0px,#862781 572.5px,#7e2482 573.0px,#701f81 573.5px,#5f187f 574.0px,#4c117a 574.5px,#390f6e 575.0px,#2a115c 575.5px,#20114b 576.0px,#19103f 576.5px,#140e36 577.0px,#120d31 577.5px,#110c2f 578.0px,#100b2d 578.5px,#100b2d 591.5px,#110c2f 592.0px,#110c2f 598.5px,#120d31 599.0px,#120d31 599.5px,#130d34 600.0px,#150e38 600.5px,#19103f 601.0px,#1d1147 601.5px,#221150 602.0px,#29115a 602.5px,#2f1163 603.0px,#36106b 603.5px,#390f6e 604.0px,#3b0f70 604.5px,#38106c 605.0px,#341069 605.5px,#2d1161 606.0px,#271258 606.5px,#21114e 607.0px,#1c1044 607.5px,#180f3d 608.0px,#150e38 608.5px,#130d34 609.0px,#130d34 609.5px,#120d31 610.0px,#120d31 628.5px,#130d34 629.0px,#130d34 629.5px,#140e36 630.0px,#150e38 630.5px,#180f3d 631.0px,#1c1044 631.5px,#21114e 632.0px,#251255 632.5px,#2c115f 633.0px,#2d1161 633.5px,#2c115f 634.0px,#29115a 634.5px,#221150 635.0px,#1d1147 635.5px,#19103f 636.0px,#160f3b 636.5px,#140e36 637.0px,#140e36 637.5px,#130d34 638.0px,#130d34 642.5px,#140e36 643.0px,#140e36 643.5px,#150e38 644.0px,#160f3b 644.5px,#19103f 645.0px,#1c1044 645.5px,#20114b 646.0px,#241253 646.5px,#2c115f 647.0px,#331067 647.5px,#3b0f70 648.0px,#420f75 648.5px,#491078 649.0px,#4e117b 649.5px,#4f127b 650.0px,#4f127b 650.5px,#4e117b 651.0px,#491078 651.5px,#420f75 652.0px,#390f6e 652.5px,#311165 653.0px,#2a115c 653.5px,#241253 654.0px,#20114b 654.5px,#1c1044 655.0px,#19103f 655.5px,#160f3b 656.0px,#150e38 656.5px,#150e38 657.0px,#140e36 657.5px,#140e36 668.5px,#150e38 669.0px,#150e38 670.0px,#160f3b 670.5px,#180f3d 671.0px,#1a1042 671.5px,#1d1147 672.0px,#221150 672.5px,#2c115f 673.0px,#36106b 673.5px,#420f75 674.0px,#4c117a 674.5px,#56147d 675.0px,#5a167e 675.5px,#5c167f 676.0px,#59157e 676.5px,#52137c 677.0px,#491078 677.5px,#3d0f71 678.0px,#311165 678.5px,#29115a 679.0px,#21114e 679.5px,#1d1147 680.0px,#19103f 680.5px,#19103f 681.0px,#1d1147 681.5px,#221150 682.0px,#2d1161 682.5px,#390f6e 683.0px,#451077 683.5px,#4e117b 684.0px,#4f127b 684.5px,#4c117a 685.0px,#420f75 685.5px,#341069 686.0px,#29115a 686.5px,#21114e 687.0px,#1c1044 687.5px,#19103f 688.0px,#160f3b 688.5px,#180f3d 689.0px,#1a1042 689.5px,#1d1147 690.0px,#241253 690.5px,#2d1161 691.0px,#390f6e 691.5px,#451077 692.0px,#4e117b 692.5px,#4f127b 693.0px,#4c117a 693.5px,#420f75 694.0px,#36106b 694.5px,#2a115c 695.0px,#221150 695.5px,#1d1147 696.0px,#1a1042 696.5px,#19103f 697.0px,#180f3d 697.5px,#180f3d 701.5px,#19103f 702.0px,#19103f 708.5px,#1a1042 709.0px,#1a1042 715.5px,#1c1044 716.0px,#1c1044 722.0px,#1d1147 722.5px,#1d1147 728.0px,#1e1149 728.5px,#1e1149 729.5px,#20114b 730.0px,#20114b 730.5px,#221150 731.0px,#241253 731.5px,#29115a 732.0px,#2d1161 732.5px,#341069 733.0px,#3d0f71 733.5px,#471078 734.0px,#4f127b 734.5px,#59157e 735.0px,#601880 735.5px,#671b80 736.0px,#6b1d81 736.5px,#6b1d81 737.0px,#6a1c81 737.5px,#651a80 738.0px,#5f187f 738.5px,#57157e 739.0px,#4e117b 739.5px,#440f76 740.0px,#3b0f70 740.5px,#341069 741.0px,#2d1161 741.5px,#29115a 742.0px,#251255 742.5px,#241253 743.0px,#221150 743.5px,#21114e 744.0px,#21114e 750.0px,#221150 750.5px,#221150 757.0px,#241253 757.5px,#241253 763.5px,#251255 764.0px,#251255 767.5px,#271258 768.0px,#271258 769.0px,#29115a 769.5px,#29115a 770.5px,#2a115c 771.0px,#2a115c 771.5px,#2c115f 772.0px,#2c115f 773.0px,#2d1161 773.5px,#2d1161 774.0px,#2f1163 774.5px,#2f1163 775.0px,#311165 775.5px,#311165 776.0px,#331067 776.5px,#341069 777.0px,#341069 777.5px,#36106b 778.0px,#38106c 778.5px,#390f6e 779.0px,#3b0f70 779.5px,#3b0f70 780.0px,#3d0f71 780.5px,#3f0f72 781.0px,#420f75 781.5px,#440f76 782.0px,#451077 782.5px,#471078 783.0px,#4a1079 783.5px,#4c117a 784.0px,#4f127b 784.5px,#51127c 785.0px,#54137d 785.5px,#56147d 786.0px,#59157e 786.5px,#5c167f 787.0px,#5f187f 787.5px,#601880 788.0px,#641a80 788.5px,#671b80 789.0px,#6a1c81 789.5px,#6d1d81 790.0px,#701f81 790.5px,#732081 791.0px,#762181 791.5px,#792282 792.0px,#7e2482 792.5px,#812581 793.0px,#842681 793.5px,#882781 794.0px,#8b2981 794.5px,#8e2a81 795.0px,#932b80 795.5px,#962c80 796.0px,#992d80 796.5px,#9c2e7f 797.0px,#9e2f7f 797.5px,#a1307e 798.0px,#bc3978 798.5px,#d5446d 799.0px,#ea5661 799.5px,#f66e5c 800.0px,#fb8761 800.5px,#fe9d6c 801.0px,#feae77 801.5px,#feb97f 802.0px,#fec287 802.5px,#fec88c 803.0px,#feca8d 803.5px,#feca8d 805.0px,#fec88c 805.5px,#fec68a 806.0px,#febf84 806.5px,#feb67c 807.0px,#fea772 807.5px,#fd9467 808.0px,#fa7d5e 808.5px,#f2645c 809.0px,#e24d66 809.5px,#ca3e72 810.0px,#b0357b 810.5px,#a02f7f 811.0px,#9c2e7f 811.5px,#992d80 812.0px,#962c80 812.5px,#932b80 813.0px,#902a81 813.5px,#8c2981 814.0px,#892881 814.5px,#842681 815.0px,#812581 815.5px,#7e2482 816.0px,#7b2382 816.5px,#762181 817.0px,#732081 817.5px,#701f81 818.0px,#6d1d81 818.5px,#6a1c81 819.0px,#671b80 819.5px,#641a80 820.0px,#601880 820.5px,#5d177f 821.0px,#5c167f 821.5px,#59157e 822.0px,#56147d 822.5px,#54137d 823.0px,#51127c 823.5px,#4f127b 824.0px,#4e117b 824.5px,#4a1079 825.0px,#491078 825.5px,#471078 826.0px,#451077 826.5px,#52137c 827.0px,#651a80 827.5px,#7e2482 828.0px,#9b2e7f 828.5px,#ba3878 829.0px,#d0416f 829.5px,#dc4869 830.0px,#db476a 830.5px,#cd4071 831.0px,#b3367a 831.5px,#942c80 832.0px,#782281 832.5px,#601880 833.0px,#621980 833.5px,#641a80 834.0px,#641a80 836.5px,#621980 837.0px,#601880 837.5px,#5f187f 838.0px,#641a80 838.5px,#792282 839.0px,#902a81 839.5px,#a5317e 840.0px,#b2357b 840.5px,#b5367a 841.0px,#ae347b 841.5px,#9c2e7f 842.0px,#862781 842.5px,#701f81 843.0px,#5c167f 843.5px,#4c117a 844.0px,#420f75 844.5px,#400f74 845.0px,#3f0f72 845.5px,#3d0f71 846.0px,#3b0f70 846.5px,#390f6e 847.0px,#38106c 847.5px,#38106c 848.0px,#36106b 848.5px,#36106b 849.0px,#341069 849.5px,#341069 850.5px,#331067 851.0px,#331067 853.0px,#311165 853.5px,#311165 862.0px,#2f1163 862.5px,#2f1163 881.0px,#311165 881.5px,#311165 882.5px,#331067 883.0px,#331067 883.5px,#341069 884.0px,#341069 884.5px,#36106b 885.0px,#38106c 885.5px,#390f6e 886.0px,#3b0f70 886.5px,#3d0f71 887.0px,#400f74 887.5px,#420f75 888.0px,#451077 888.5px,#471078 889.0px,#4a1079 889.5px,#4e117b 890.0px,#51127c 890.5px,#54137d 891.0px,#57157e 891.5px,#5c167f 892.0px,#5f187f 892.5px,#621980 893.0px,#752181 893.5px,#892881 894.0px,#a3307e 894.5px,#c03a76 895.0px,#dc4869 895.5px,#f2625d 896.0px,#fb835f 896.5px,#fea16e 897.0px,#feb97f 897.5px,#fec88c 898.0px,#fecf92 898.5px,#fecc8f 899.0px,#fec185 899.5px,#feaa74 900.0px,#fc9065 900.5px,#f66e5c 901.0px,#e75263 901.5px,#cc3f71 902.0px,#ad347c 902.5px,#932b80 903.0px,#7b2382 903.5px,#681c81 904.0px,#5f187f 904.5px,#5c167f 905.0px,#57157e 905.5px,#54137d 906.0px,#51127c 906.5px,#4e117b 907.0px,#4a1079 907.5px,#471078 908.0px,#440f76 908.5px,#400f74 909.0px,#3f0f72 909.5px,#3b0f70 910.0px,#390f6e 910.5px,#38106c 911.0px,#36106b 911.5px,#341069 912.0px,#331067 912.5px,#311165 913.0px,#2f1163 913.5px,#2f1163 914.0px,#2d1161 914.5px,#2d1161 915.0px,#2c115f 915.5px,#2c115f 916.5px,#2a115c 917.0px,#2a115c 920.5px,#29115a 921.0px,#29115a 932.0px,#271258 932.5px,#271258 938.5px,#29115a 939.0px,#29115a 944.0px,#2a115c 944.5px,#2a115c 949.5px,#2c115f 950.0px,#2c115f 955.0px,#2d1161 955.5px,#2d1161 957.5px,#2f1163 958.0px,#311165 958.5px,#331067 959.0px,#38106c 959.5px,#400f74 960.0px,#4a1079 960.5px,#59157e 961.0px,#6a1c81 961.5px,#812581 962.0px,#9b2e7f 962.5px,#b73779 963.0px,#cf4070 963.5px,#e24d66 964.0px,#eb5760 964.5px,#ed5a5f 965.0px,#e95462 965.5px,#dc4869 966.0px,#c73d73 966.5px,#ad347c 967.0px,#912b81 967.5px,#792282 968.0px,#651a80 968.5px,#54137d 969.0px,#491078 969.5px,#3f0f72 970.0px,#491078 970.5px,#56147d 971.0px,#671b80 971.5px,#7c2382 972.0px,#962c80 972.5px,#b3367a 973.0px,#d0416f 973.5px,#e75263 974.0px,#f2645c 974.5px,#f66e5c 975.0px,#f66e5c 975.5px,#f1605d 976.0px,#e44f64 976.5px,#cc3f71 977.0px,#ae347b 977.5px,#932b80 978.0px,#792282 978.5px,#651a80 979.0px,#5c167f 979.5px,#6b1d81 980.0px,#802582 980.5px,#962c80 981.0px,#b0357b 981.5px,#cc3f71 982.0px,#e34e65 982.5px,#f2645c 983.0px,#f9785d 983.5px,#fb8560 984.0px,#fb8761 984.5px,#fa815f 985.0px,#f7705c 985.5px,#ee5b5e 986.0px,#dc4869 986.5px,#c23b75 987.0px,#a8327d 987.5px,#8e2a81 988.0px,#782281 988.5px,#671b80 989.0px,#59157e 989.5px,#4e117b 990.0px,#451077 990.5px,#3f0f72 991.0px,#3b0f70 991.5px,#38106c 992.0px,#38106c 992.5px,#36106b 993.0px,#36106b 993.5px,#341069 994.0px,#341069 999.5px,#331067 1000.0px,#331067 1004.0px,#341069 1004.5px,#38106c 1005.0px,#3d0f71 1005.5px,#471078 1006.0px,#56147d 1006.5px,#671b80 1007.0px,#782281 1007.5px,#862781 1008.0px,#8c2981 1008.5px,#892881 1009.0px,#7c2382 1009.5px,#6d1d81 1010.0px,#5a167e 1010.5px,#4c117a 1011.0px,#400f74 1011.5px,#38106c 1012.0px,#341069 1012.5px,#331067 1013.0px,#311165 1013.5px,#311165 1015.0px,#2f1163 1015.5px,#2f1163 1023.0px,#2d1161 1023.5px,#2d1161 1030.0px,#311165 1030.5px,#341069 1031.0px,#3d0f71 1031.5px,#491078 1032.0px,#59157e 1032.5px,#6b1d81 1033.0px,#7c2382 1033.5px,#892881 1034.0px,#8c2981 1034.5px,#842681 1035.0px,#762181 1035.5px,#641a80 1036.0px,#51127c 1036.5px,#420f75 1037.0px,#38106c 1037.5px,#311165 1038.0px,#2d1161 1038.5px,#2c115f 1039.0px,#2c115f 1039.5px,#2a115c 1040.0px,#2c115f 1040.5px,#2c115f 1041.0px,#2f1163 1041.5px,#341069 1042.0px,#3f0f72 1042.5px,#4e117b 1043.0px,#5f187f 1043.5px,#721f81 1044.0px,#832681 1044.5px,#8b2981 1045.0px,#8b2981 1045.5px,#802582 1046.0px,#6e1e81 1046.5px,#5a167e 1047.0px,#491078 1047.5px,#3b0f70 1048.0px,#331067 1048.5px,#2d1161 1049.0px,#2a115c 1049.5px,#29115a 1050.0px,#29115a 1054.0px,#271258 1054.5px,#271258 1062.0px,#251255 1062.5px,#251255 1072.0px,#271258 1072.5px,#271258 1081.5px,#29115a 1082.0px,#29115a 1091.0px,#2a115c 1091.5px,#2a115c 1100.0px,#2c115f 1100.5px,#2c115f 1102.5px,#2d1161 1103.0px,#2f1163 1103.5px,#331067 1104.0px,#38106c 1104.5px,#3f0f72 1105.0px,#451077 1105.5px,#4e117b 1106.0px,#52137c 1106.5px,#54137d 1107.0px,#51127c 1107.5px,#4c117a 1108.0px,#440f76 1108.5px,#3b0f70 1109.0px,#36106b 1109.5px,#311165 1110.0px,#2f1163 1110.5px,#2d1161 1111.0px,#2d1161 1118.5px,#2f1163 1119.0px,#2f1163 1128.0px,#311165 1128.5px,#311165 1137.0px,#331067 1137.5px,#331067 1146.5px,#341069 1147.0px,#341069 1155.5px,#36106b 1156.0px,#36106b 1161.5px);"></div>
<div class="b " style="left:12.70px;top:453.40px;width:0.80px;height:2.60px;background:#9a9a9a;"></div><span class="t " style="left:12.49px;top:460.00px;font-size:6.50px;line-height:7px;color:#3c3c3c;">0</span><div class="b " style="left:48.99px;top:453.40px;width:0.80px;height:2.60px;background:#9a9a9a;"></div><span class="t " style="left:45.77px;top:460.00px;font-size:6.50px;line-height:7px;color:#3c3c3c;">32</span><div class="b " style="left:85.28px;top:453.40px;width:0.80px;height:2.60px;background:#9a9a9a;"></div><span class="t " style="left:82.06px;top:460.00px;font-size:6.50px;line-height:7px;color:#3c3c3c;">64</span><div class="b " style="left:121.56px;top:453.40px;width:0.80px;height:2.60px;background:#9a9a9a;"></div><span class="t " style="left:118.35px;top:460.00px;font-size:6.50px;line-height:7px;color:#3c3c3c;">96</span><div class="b " style="left:157.85px;top:453.40px;width:0.80px;height:2.60px;background:#9a9a9a;"></div><span class="t " style="left:152.83px;top:460.00px;font-size:6.50px;line-height:7px;color:#3c3c3c;">128</span><div class="b " style="left:194.14px;top:453.40px;width:0.80px;height:2.60px;background:#9a9a9a;"></div><span class="t " style="left:189.12px;top:460.00px;font-size:6.50px;line-height:7px;color:#3c3c3c;">160</span><div class="b " style="left:230.43px;top:453.40px;width:0.80px;height:2.60px;background:#9a9a9a;"></div><span class="t " style="left:225.41px;top:460.00px;font-size:6.50px;line-height:7px;color:#3c3c3c;">192</span><div class="b " style="left:266.72px;top:453.40px;width:0.80px;height:2.60px;background:#9a9a9a;"></div><span class="t " style="left:261.69px;top:460.00px;font-size:6.50px;line-height:7px;color:#3c3c3c;">224</span><div class="b " style="left:303.00px;top:453.40px;width:0.80px;height:2.60px;background:#9a9a9a;"></div><span class="t " style="left:297.98px;top:460.00px;font-size:6.50px;line-height:7px;color:#3c3c3c;">256</span><div class="b " style="left:339.29px;top:453.40px;width:0.80px;height:2.60px;background:#9a9a9a;"></div><span class="t " style="left:334.27px;top:460.00px;font-size:6.50px;line-height:7px;color:#3c3c3c;">288</span><div class="b " style="left:375.58px;top:453.40px;width:0.80px;height:2.60px;background:#9a9a9a;"></div><span class="t " style="left:370.56px;top:460.00px;font-size:6.50px;line-height:7px;color:#3c3c3c;">320</span><div class="b " style="left:411.87px;top:453.40px;width:0.80px;height:2.60px;background:#9a9a9a;"></div><span class="t " style="left:406.85px;top:460.00px;font-size:6.50px;line-height:7px;color:#3c3c3c;">352</span><div class="b " style="left:448.16px;top:453.40px;width:0.80px;height:2.60px;background:#9a9a9a;"></div><span class="t " style="left:443.13px;top:460.00px;font-size:6.50px;line-height:7px;color:#3c3c3c;">384</span><div class="b " style="left:484.44px;top:453.40px;width:0.80px;height:2.60px;background:#9a9a9a;"></div><span class="t " style="left:479.42px;top:460.00px;font-size:6.50px;line-height:7px;color:#3c3c3c;">416</span><div class="b " style="left:520.73px;top:453.40px;width:0.80px;height:2.60px;background:#9a9a9a;"></div><span class="t " style="left:515.71px;top:460.00px;font-size:6.50px;line-height:7px;color:#3c3c3c;">448</span><div class="b " style="left:557.02px;top:453.40px;width:0.80px;height:2.60px;background:#9a9a9a;"></div><span class="t " style="left:552.00px;top:460.00px;font-size:6.50px;line-height:7px;color:#3c3c3c;">480</span><div class="b " style="left:593.31px;top:453.40px;width:0.80px;height:2.60px;background:#9a9a9a;"></div><span class="t " style="left:588.29px;top:460.00px;font-size:6.50px;line-height:7px;color:#3c3c3c;">512</span><div class="b " style="left:629.60px;top:453.40px;width:0.80px;height:2.60px;background:#9a9a9a;"></div><span class="t " style="left:624.57px;top:460.00px;font-size:6.50px;line-height:7px;color:#3c3c3c;">544</span><div class="b " style="left:665.88px;top:453.40px;width:0.80px;height:2.60px;background:#9a9a9a;"></div><span class="t " style="left:660.86px;top:460.00px;font-size:6.50px;line-height:7px;color:#3c3c3c;">576</span><div class="b " style="left:702.17px;top:453.40px;width:0.80px;height:2.60px;background:#9a9a9a;"></div><span class="t " style="left:697.15px;top:460.00px;font-size:6.50px;line-height:7px;color:#3c3c3c;">608</span><div class="b " style="left:738.46px;top:453.40px;width:0.80px;height:2.60px;background:#9a9a9a;"></div><span class="t " style="left:733.44px;top:460.00px;font-size:6.50px;line-height:7px;color:#3c3c3c;">640</span><div class="b " style="left:774.75px;top:453.40px;width:0.80px;height:2.60px;background:#9a9a9a;"></div><span class="t " style="left:769.73px;top:460.00px;font-size:6.50px;line-height:7px;color:#3c3c3c;">672</span><div class="b " style="left:811.04px;top:453.40px;width:0.80px;height:2.60px;background:#9a9a9a;"></div><span class="t " style="left:806.01px;top:460.00px;font-size:6.50px;line-height:7px;color:#3c3c3c;">704</span><div class="b " style="left:847.32px;top:453.40px;width:0.80px;height:2.60px;background:#9a9a9a;"></div><span class="t " style="left:842.30px;top:460.00px;font-size:6.50px;line-height:7px;color:#3c3c3c;">736</span><div class="b " style="left:883.61px;top:453.40px;width:0.80px;height:2.60px;background:#9a9a9a;"></div><span class="t " style="left:878.59px;top:460.00px;font-size:6.50px;line-height:7px;color:#3c3c3c;">768</span><div class="b " style="left:919.90px;top:453.40px;width:0.80px;height:2.60px;background:#9a9a9a;"></div><span class="t " style="left:914.88px;top:460.00px;font-size:6.50px;line-height:7px;color:#3c3c3c;">800</span><div class="b " style="left:956.19px;top:453.40px;width:0.80px;height:2.60px;background:#9a9a9a;"></div><span class="t " style="left:951.17px;top:460.00px;font-size:6.50px;line-height:7px;color:#3c3c3c;">832</span><div class="b " style="left:992.48px;top:453.40px;width:0.80px;height:2.60px;background:#9a9a9a;"></div><span class="t " style="left:987.45px;top:460.00px;font-size:6.50px;line-height:7px;color:#3c3c3c;">864</span><div class="b " style="left:1028.76px;top:453.40px;width:0.80px;height:2.60px;background:#9a9a9a;"></div><span class="t " style="left:1023.74px;top:460.00px;font-size:6.50px;line-height:7px;color:#3c3c3c;">896</span><div class="b " style="left:1065.05px;top:453.40px;width:0.80px;height:2.60px;background:#9a9a9a;"></div><span class="t " style="left:1060.03px;top:460.00px;font-size:6.50px;line-height:7px;color:#3c3c3c;">928</span><div class="b " style="left:1101.34px;top:453.40px;width:0.80px;height:2.60px;background:#9a9a9a;"></div><span class="t " style="left:1096.32px;top:460.00px;font-size:6.50px;line-height:7px;color:#3c3c3c;">960</span><div class="b " style="left:1137.63px;top:453.40px;width:0.80px;height:2.60px;background:#9a9a9a;"></div><span class="t " style="left:1132.61px;top:460.00px;font-size:6.50px;line-height:7px;color:#3c3c3c;">992</span><div class="b " style="left:1172.78px;top:453.40px;width:0.80px;height:2.60px;background:#9a9a9a;"></div><span class="t " style="left:1165.95px;top:460.00px;font-size:6.50px;line-height:7px;color:#3c3c3c;">1023</span>
<div class="b " style="left:12.70px;top:619.40px;width:0.80px;height:2.60px;background:#9a9a9a;"></div><span class="t " style="left:12.49px;top:626.00px;font-size:6.50px;line-height:7px;color:#3c3c3c;">0</span><div class="b " style="left:48.99px;top:619.40px;width:0.80px;height:2.60px;background:#9a9a9a;"></div><span class="t " style="left:45.77px;top:626.00px;font-size:6.50px;line-height:7px;color:#3c3c3c;">32</span><div class="b " style="left:85.28px;top:619.40px;width:0.80px;height:2.60px;background:#9a9a9a;"></div><span class="t " style="left:82.06px;top:626.00px;font-size:6.50px;line-height:7px;color:#3c3c3c;">64</span><div class="b " style="left:121.56px;top:619.40px;width:0.80px;height:2.60px;background:#9a9a9a;"></div><span class="t " style="left:118.35px;top:626.00px;font-size:6.50px;line-height:7px;color:#3c3c3c;">96</span><div class="b " style="left:157.85px;top:619.40px;width:0.80px;height:2.60px;background:#9a9a9a;"></div><span class="t " style="left:152.83px;top:626.00px;font-size:6.50px;line-height:7px;color:#3c3c3c;">128</span><div class="b " style="left:194.14px;top:619.40px;width:0.80px;height:2.60px;background:#9a9a9a;"></div><span class="t " style="left:189.12px;top:626.00px;font-size:6.50px;line-height:7px;color:#3c3c3c;">160</span><div class="b " style="left:230.43px;top:619.40px;width:0.80px;height:2.60px;background:#9a9a9a;"></div><span class="t " style="left:225.41px;top:626.00px;font-size:6.50px;line-height:7px;color:#3c3c3c;">192</span><div class="b " style="left:266.72px;top:619.40px;width:0.80px;height:2.60px;background:#9a9a9a;"></div><span class="t " style="left:261.69px;top:626.00px;font-size:6.50px;line-height:7px;color:#3c3c3c;">224</span><div class="b " style="left:303.00px;top:619.40px;width:0.80px;height:2.60px;background:#9a9a9a;"></div><span class="t " style="left:297.98px;top:626.00px;font-size:6.50px;line-height:7px;color:#3c3c3c;">256</span><div class="b " style="left:339.29px;top:619.40px;width:0.80px;height:2.60px;background:#9a9a9a;"></div><span class="t " style="left:334.27px;top:626.00px;font-size:6.50px;line-height:7px;color:#3c3c3c;">288</span><div class="b " style="left:375.58px;top:619.40px;width:0.80px;height:2.60px;background:#9a9a9a;"></div><span class="t " style="left:370.56px;top:626.00px;font-size:6.50px;line-height:7px;color:#3c3c3c;">320</span><div class="b " style="left:411.87px;top:619.40px;width:0.80px;height:2.60px;background:#9a9a9a;"></div><span class="t " style="left:406.85px;top:626.00px;font-size:6.50px;line-height:7px;color:#3c3c3c;">352</span><div class="b " style="left:448.16px;top:619.40px;width:0.80px;height:2.60px;background:#9a9a9a;"></div><span class="t " style="left:443.13px;top:626.00px;font-size:6.50px;line-height:7px;color:#3c3c3c;">384</span><div class="b " style="left:484.44px;top:619.40px;width:0.80px;height:2.60px;background:#9a9a9a;"></div><span class="t " style="left:479.42px;top:626.00px;font-size:6.50px;line-height:7px;color:#3c3c3c;">416</span><div class="b " style="left:520.73px;top:619.40px;width:0.80px;height:2.60px;background:#9a9a9a;"></div><span class="t " style="left:515.71px;top:626.00px;font-size:6.50px;line-height:7px;color:#3c3c3c;">448</span><div class="b " style="left:557.02px;top:619.40px;width:0.80px;height:2.60px;background:#9a9a9a;"></div><span class="t " style="left:552.00px;top:626.00px;font-size:6.50px;line-height:7px;color:#3c3c3c;">480</span><div class="b " style="left:593.31px;top:619.40px;width:0.80px;height:2.60px;background:#9a9a9a;"></div><span class="t " style="left:588.29px;top:626.00px;font-size:6.50px;line-height:7px;color:#3c3c3c;">512</span><div class="b " style="left:629.60px;top:619.40px;width:0.80px;height:2.60px;background:#9a9a9a;"></div><span class="t " style="left:624.57px;top:626.00px;font-size:6.50px;line-height:7px;color:#3c3c3c;">544</span><div class="b " style="left:665.88px;top:619.40px;width:0.80px;height:2.60px;background:#9a9a9a;"></div><span class="t " style="left:660.86px;top:626.00px;font-size:6.50px;line-height:7px;color:#3c3c3c;">576</span><div class="b " style="left:702.17px;top:619.40px;width:0.80px;height:2.60px;background:#9a9a9a;"></div><span class="t " style="left:697.15px;top:626.00px;font-size:6.50px;line-height:7px;color:#3c3c3c;">608</span><div class="b " style="left:738.46px;top:619.40px;width:0.80px;height:2.60px;background:#9a9a9a;"></div><span class="t " style="left:733.44px;top:626.00px;font-size:6.50px;line-height:7px;color:#3c3c3c;">640</span><div class="b " style="left:774.75px;top:619.40px;width:0.80px;height:2.60px;background:#9a9a9a;"></div><span class="t " style="left:769.73px;top:626.00px;font-size:6.50px;line-height:7px;color:#3c3c3c;">672</span><div class="b " style="left:811.04px;top:619.40px;width:0.80px;height:2.60px;background:#9a9a9a;"></div><span class="t " style="left:806.01px;top:626.00px;font-size:6.50px;line-height:7px;color:#3c3c3c;">704</span><div class="b " style="left:847.32px;top:619.40px;width:0.80px;height:2.60px;background:#9a9a9a;"></div><span class="t " style="left:842.30px;top:626.00px;font-size:6.50px;line-height:7px;color:#3c3c3c;">736</span><div class="b " style="left:883.61px;top:619.40px;width:0.80px;height:2.60px;background:#9a9a9a;"></div><span class="t " style="left:878.59px;top:626.00px;font-size:6.50px;line-height:7px;color:#3c3c3c;">768</span><div class="b " style="left:919.90px;top:619.40px;width:0.80px;height:2.60px;background:#9a9a9a;"></div><span class="t " style="left:914.88px;top:626.00px;font-size:6.50px;line-height:7px;color:#3c3c3c;">800</span><div class="b " style="left:956.19px;top:619.40px;width:0.80px;height:2.60px;background:#9a9a9a;"></div><span class="t " style="left:951.17px;top:626.00px;font-size:6.50px;line-height:7px;color:#3c3c3c;">832</span><div class="b " style="left:992.48px;top:619.40px;width:0.80px;height:2.60px;background:#9a9a9a;"></div><span class="t " style="left:987.45px;top:626.00px;font-size:6.50px;line-height:7px;color:#3c3c3c;">864</span><div class="b " style="left:1028.76px;top:619.40px;width:0.80px;height:2.60px;background:#9a9a9a;"></div><span class="t " style="left:1023.74px;top:626.00px;font-size:6.50px;line-height:7px;color:#3c3c3c;">896</span><div class="b " style="left:1065.05px;top:619.40px;width:0.80px;height:2.60px;background:#9a9a9a;"></div><span class="t " style="left:1060.03px;top:626.00px;font-size:6.50px;line-height:7px;color:#3c3c3c;">928</span><div class="b " style="left:1101.34px;top:619.40px;width:0.80px;height:2.60px;background:#9a9a9a;"></div><span class="t " style="left:1096.32px;top:626.00px;font-size:6.50px;line-height:7px;color:#3c3c3c;">960</span><div class="b " style="left:1137.63px;top:619.40px;width:0.80px;height:2.60px;background:#9a9a9a;"></div><span class="t " style="left:1132.61px;top:626.00px;font-size:6.50px;line-height:7px;color:#3c3c3c;">992</span><div class="b " style="left:1172.78px;top:619.40px;width:0.80px;height:2.60px;background:#9a9a9a;"></div><span class="t " style="left:1165.95px;top:626.00px;font-size:6.50px;line-height:7px;color:#3c3c3c;">1023</span>
<span class="t " style="left:16.00px;top:306.00px;font-size:9.60px;line-height:11px;color:#fff;letter-spacing:-0.732px;-webkit-text-stroke:0.15px #fff;">SW</span>
<span class="t " style="left:16.00px;top:472.00px;font-size:9.60px;line-height:11px;color:#fff;letter-spacing:-0.144px;-webkit-text-stroke:0.15px #fff;">LW</span>
<div class="b " style="left:13.10px;top:393.50px;width:1161.20px;height:1.00px;background:rgba(150,150,150,.8);"></div>
<div class="b " style="left:809.10px;top:302.20px;width:0.90px;height:153.30px;background:rgba(150,150,150,.6);"></div>
<div class="b " style="left:13.30px;top:386.00px;width:20.00px;height:16.70px;background:#fff;border:1px solid #d0d0d0;box-sizing:border-box;"></div>
<span class="t " style="left:16.70px;top:389.00px;font-size:8.40px;line-height:10px;color:#333;letter-spacing:-0.139px;-webkit-text-stroke:0.15px #333;">405</span>
<div class="b " style="left:785.00px;top:455.60px;width:48.60px;height:11.60px;background:#fff;border:1px solid #9a9a9a;box-sizing:border-box;border-radius:1px;"></div>
<span class="t " style="left:788.50px;top:458.00px;font-size:8.00px;line-height:9px;color:#333;letter-spacing:0.069px;-webkit-text-stroke:0.15px #333;">702 / 763.1</span>
<svg class="b" style="left:803.00px;top:387.50px;" width="16" height="16" viewBox="0 0 16 16"><path d="M9 9 L13.2 13.2" stroke="#000" stroke-width="1.8" stroke-linecap="round"/><circle cx="6.5" cy="6.5" r="3.6" fill="#fff" stroke="#000" stroke-width="1.2"/><path d="M6.5 4.4 V8.6 M4.4 6.5 H8.6" stroke="#000" stroke-width="1.2"/></svg>
</div>
</body></html>
